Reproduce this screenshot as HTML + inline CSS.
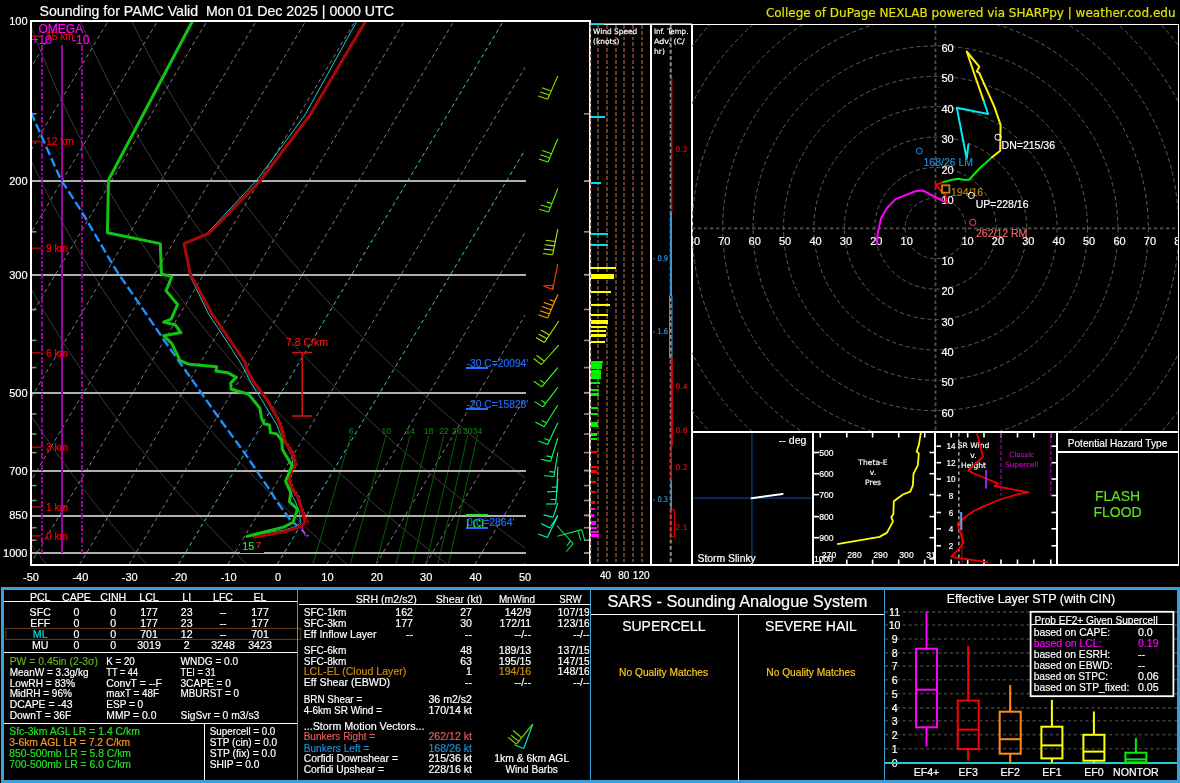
<!DOCTYPE html>
<html lang="en"><head><meta charset="utf-8"><title>Sounding for PAMC</title>
<style>
html,body{margin:0;padding:0;background:#000;}
body{width:1180px;height:783px;overflow:hidden;}
svg{display:block;will-change:transform;}
text{stroke-width:0.18px;}
text.s{font-family:"Liberation Sans", sans-serif;}
text.d{font-family:"DejaVu Sans", "Liberation Sans", sans-serif;}
</style></head><body>
<svg width="1180" height="783" viewBox="0 0 1180 783">
<rect x="0" y="0" width="1180" height="783" fill="#000"/>
<text class="s" x="39.5" y="15.6" font-size="15" fill="#fff" stroke="#fff" textLength="354.5" lengthAdjust="spacingAndGlyphs">Sounding for PAMC Valid  Mon 01 Dec 2025 | 0000 UTC</text>
<text class="d" x="1175.5" y="16.8" font-size="12" fill="#e2e200" stroke="#e2e200" text-anchor="end">College of DuPage NEXLAB powered via SHARPpy | weather.cod.edu</text>
<defs><clipPath id="cT"><rect x="31" y="21" width="494" height="543.3"/></clipPath><clipPath id="cF"><rect x="31" y="21" width="558" height="543.3"/></clipPath></defs>
<g clip-path="url(#cT)">
<polyline points="46.5,564.3 44.8,562.1 43.0,559.8 41.3,557.6 39.5,555.3 37.8,553.0 36.0,550.7 34.2,548.3 32.4,546.0 30.6,543.6 28.8,541.1 27.0,538.7 25.2,536.2 23.3,533.7 21.5,531.2 19.6,528.6 17.8,526.1 15.9,523.5 14.0,520.8 12.1,518.1 10.2,515.4 8.3,512.7 6.4,509.9 4.4,507.1 2.5,504.3 0.5,501.4 -1.5,498.5 -3.5,495.6 -5.4,492.6 -7.5,489.6 -9.5,486.5 -11.5,483.4 -13.6,480.3 -15.6,477.1 -17.7,473.9 -19.8,470.6 -21.9,467.3 -24.0,463.9 -26.1,460.5 -28.2,457.0 -30.4,453.5 -32.5,449.9 -34.7,446.2 -36.9,442.5 -39.1,438.8 -41.4,435.0 -43.6,431.1 -45.9,427.1 -48.1,423.1 -50.4,419.0 -52.7,414.9 -55.1,410.6 -57.4,406.3 -59.8,401.9 -62.1,397.4 -64.5,392.8 -66.9,388.2 -69.4,383.4 -71.8,378.5 -74.3,373.6 -76.8,368.5 -79.3,363.3 -81.8,358.0 -84.4,352.6 -87.0,347.0 -89.5,341.3 -92.2,335.4 -94.8,329.4 -97.5,323.3 -100.2,316.9 -102.9,310.4 -105.6,303.7 -108.3,296.8 -111.1,289.7 -113.9,282.4 -116.8,274.8 -119.6,267.0 -122.5,258.9 -125.4,250.5 -128.3,241.8 -131.2,232.7 -134.2,223.3 -137.2,213.4 -140.2,203.2 -143.2,192.4 -146.2,181.1 -149.3,169.3 -152.3,156.8 -155.3,143.6 -158.4,129.6 -161.4,114.7 -164.4,98.7 -167.3,81.6 -170.2,63.1 -172.9,43.0 -175.5,21.0" fill="none" stroke="#3a3a3a" stroke-width="1"/>
<polyline points="146.7,564.3 144.7,562.1 142.7,559.8 140.6,557.6 138.6,555.3 136.6,553.0 134.5,550.7 132.4,548.3 130.4,546.0 128.3,543.6 126.2,541.1 124.1,538.7 121.9,536.2 119.8,533.7 117.7,531.2 115.5,528.6 113.3,526.1 111.1,523.5 108.9,520.8 106.7,518.1 104.5,515.4 102.3,512.7 100.0,509.9 97.8,507.1 95.5,504.3 93.2,501.4 90.9,498.5 88.6,495.6 86.2,492.6 83.9,489.6 81.5,486.5 79.1,483.4 76.8,480.3 74.3,477.1 71.9,473.9 69.5,470.6 67.0,467.3 64.5,463.9 62.0,460.5 59.5,457.0 57.0,453.5 54.4,449.9 51.9,446.2 49.3,442.5 46.7,438.8 44.0,435.0 41.4,431.1 38.7,427.1 36.0,423.1 33.3,419.0 30.6,414.9 27.8,410.6 25.0,406.3 22.2,401.9 19.4,397.4 16.5,392.8 13.6,388.2 10.7,383.4 7.8,378.5 4.8,373.6 1.9,368.5 -1.2,363.3 -4.2,358.0 -7.3,352.6 -10.4,347.0 -13.5,341.3 -16.7,335.4 -19.9,329.4 -23.1,323.3 -26.4,316.9 -29.7,310.4 -33.0,303.7 -36.4,296.8 -39.8,289.7 -43.2,282.4 -46.7,274.8 -50.2,267.0 -53.8,258.9 -57.4,250.5 -61.1,241.8 -64.7,232.7 -68.5,223.3 -72.3,213.4 -76.1,203.2 -79.9,192.4 -83.8,181.1 -87.8,169.3 -91.8,156.8 -95.8,143.6 -99.9,129.6 -103.9,114.7 -108.0,98.7 -112.1,81.6 -116.3,63.1 -120.3,43.0 -124.3,21.0" fill="none" stroke="#3a3a3a" stroke-width="1"/>
<polyline points="246.9,564.3 244.6,562.1 242.3,559.8 240.0,557.6 237.7,555.3 235.4,553.0 233.0,550.7 230.7,548.3 228.3,546.0 225.9,543.6 223.5,541.1 221.1,538.7 218.7,536.2 216.3,533.7 213.8,531.2 211.4,528.6 208.9,526.1 206.4,523.5 203.9,520.8 201.4,518.1 198.8,515.4 196.3,512.7 193.7,509.9 191.1,507.1 188.5,504.3 185.9,501.4 183.3,498.5 180.6,495.6 177.9,492.6 175.2,489.6 172.5,486.5 169.8,483.4 167.1,480.3 164.3,477.1 161.5,473.9 158.7,470.6 155.9,467.3 153.0,463.9 150.1,460.5 147.3,457.0 144.3,453.5 141.4,449.9 138.4,446.2 135.5,442.5 132.4,438.8 129.4,435.0 126.3,431.1 123.3,427.1 120.1,423.1 117.0,419.0 113.8,414.9 110.6,410.6 107.4,406.3 104.2,401.9 100.9,397.4 97.6,392.8 94.2,388.2 90.8,383.4 87.4,378.5 84.0,373.6 80.5,368.5 77.0,363.3 73.4,358.0 69.8,352.6 66.2,347.0 62.5,341.3 58.8,335.4 55.1,329.4 51.3,323.3 47.4,316.9 43.5,310.4 39.6,303.7 35.6,296.8 31.6,289.7 27.5,282.4 23.3,274.8 19.1,267.0 14.9,258.9 10.6,250.5 6.2,241.8 1.7,232.7 -2.8,223.3 -7.3,213.4 -12.0,203.2 -16.7,192.4 -21.5,181.1 -26.3,169.3 -31.2,156.8 -36.2,143.6 -41.3,129.6 -46.5,114.7 -51.7,98.7 -57.0,81.6 -62.3,63.1 -67.7,43.0 -73.2,21.0" fill="none" stroke="#3a3a3a" stroke-width="1"/>
<polyline points="347.1,564.3 344.5,562.1 341.9,559.8 339.4,557.6 336.8,555.3 334.2,553.0 331.5,550.7 328.9,548.3 326.3,546.0 323.6,543.6 320.9,541.1 318.2,538.7 315.5,536.2 312.8,533.7 310.0,531.2 307.2,528.6 304.5,526.1 301.7,523.5 298.8,520.8 296.0,518.1 293.2,515.4 290.3,512.7 287.4,509.9 284.5,507.1 281.5,504.3 278.6,501.4 275.6,498.5 272.6,495.6 269.6,492.6 266.6,489.6 263.5,486.5 260.5,483.4 257.4,480.3 254.2,477.1 251.1,473.9 247.9,470.6 244.7,467.3 241.5,463.9 238.3,460.5 235.0,457.0 231.7,453.5 228.4,449.9 225.0,446.2 221.6,442.5 218.2,438.8 214.8,435.0 211.3,431.1 207.8,427.1 204.3,423.1 200.7,419.0 197.1,414.9 193.5,410.6 189.8,406.3 186.1,401.9 182.4,397.4 178.6,392.8 174.8,388.2 171.0,383.4 167.1,378.5 163.1,373.6 159.2,368.5 155.1,363.3 151.1,358.0 147.0,352.6 142.8,347.0 138.6,341.3 134.3,335.4 130.0,329.4 125.6,323.3 121.2,316.9 116.7,310.4 112.2,303.7 107.6,296.8 102.9,289.7 98.2,282.4 93.4,274.8 88.5,267.0 83.6,258.9 78.5,250.5 73.4,241.8 68.2,232.7 63.0,223.3 57.6,213.4 52.1,203.2 46.6,192.4 40.9,181.1 35.2,169.3 29.3,156.8 23.3,143.6 17.2,129.6 11.0,114.7 4.6,98.7 -1.8,81.6 -8.4,63.1 -15.2,43.0 -22.0,21.0" fill="none" stroke="#3a3a3a" stroke-width="1"/>
<polyline points="447.2,564.3 444.4,562.1 441.6,559.8 438.7,557.6 435.9,555.3 433.0,553.0 430.1,550.7 427.1,548.3 424.2,546.0 421.2,543.6 418.3,541.1 415.3,538.7 412.3,536.2 409.2,533.7 406.2,531.2 403.1,528.6 400.0,526.1 396.9,523.5 393.8,520.8 390.6,518.1 387.5,515.4 384.3,512.7 381.1,509.9 377.8,507.1 374.6,504.3 371.3,501.4 368.0,498.5 364.7,495.6 361.3,492.6 357.9,489.6 354.5,486.5 351.1,483.4 347.7,480.3 344.2,477.1 340.7,473.9 337.1,470.6 333.6,467.3 330.0,463.9 326.4,460.5 322.7,457.0 319.1,453.5 315.3,449.9 311.6,446.2 307.8,442.5 304.0,438.8 300.2,435.0 296.3,431.1 292.4,427.1 288.4,423.1 284.4,419.0 280.4,414.9 276.4,410.6 272.2,406.3 268.1,401.9 263.9,397.4 259.7,392.8 255.4,388.2 251.1,383.4 246.7,378.5 242.3,373.6 237.8,368.5 233.3,363.3 228.7,358.0 224.1,352.6 219.4,347.0 214.6,341.3 209.8,335.4 204.9,329.4 200.0,323.3 195.0,316.9 189.9,310.4 184.8,303.7 179.6,296.8 174.3,289.7 168.9,282.4 163.4,274.8 157.9,267.0 152.2,258.9 146.5,250.5 140.7,241.8 134.7,232.7 128.7,223.3 122.5,213.4 116.2,203.2 109.8,192.4 103.3,181.1 96.6,169.3 89.8,156.8 82.9,143.6 75.7,129.6 68.4,114.7 61.0,98.7 53.3,81.6 45.5,63.1 37.4,43.0 29.2,21.0" fill="none" stroke="#3a3a3a" stroke-width="1"/>
<polyline points="547.4,564.3 544.3,562.1 541.2,559.8 538.1,557.6 534.9,555.3 531.8,553.0 528.6,550.7 525.4,548.3 522.1,546.0 518.9,543.6 515.6,541.1 512.3,538.7 509.0,536.2 505.7,533.7 502.4,531.2 499.0,528.6 495.6,526.1 492.2,523.5 488.7,520.8 485.3,518.1 481.8,515.4 478.3,512.7 474.7,509.9 471.2,507.1 467.6,504.3 464.0,501.4 460.4,498.5 456.7,495.6 453.0,492.6 449.3,489.6 445.5,486.5 441.8,483.4 438.0,480.3 434.1,477.1 430.3,473.9 426.4,470.6 422.5,467.3 418.5,463.9 414.5,460.5 410.5,457.0 406.4,453.5 402.3,449.9 398.2,446.2 394.0,442.5 389.8,438.8 385.6,435.0 381.3,431.1 376.9,427.1 372.6,423.1 368.2,419.0 363.7,414.9 359.2,410.6 354.7,406.3 350.1,401.9 345.4,397.4 340.7,392.8 336.0,388.2 331.2,383.4 326.3,378.5 321.4,373.6 316.4,368.5 311.4,363.3 306.3,358.0 301.2,352.6 296.0,347.0 290.7,341.3 285.3,335.4 279.9,329.4 274.4,323.3 268.8,316.9 263.1,310.4 257.4,303.7 251.5,296.8 245.6,289.7 239.6,282.4 233.5,274.8 227.2,267.0 220.9,258.9 214.5,250.5 207.9,241.8 201.2,232.7 194.4,223.3 187.4,213.4 180.3,203.2 173.1,192.4 165.7,181.1 158.1,169.3 150.4,156.8 142.4,143.6 134.3,129.6 125.9,114.7 117.3,98.7 108.5,81.6 99.4,63.1 90.0,43.0 80.4,21.0" fill="none" stroke="#3a3a3a" stroke-width="1"/>
<polyline points="647.6,564.3 644.2,562.1 640.9,559.8 637.4,557.6 634.0,555.3 630.6,553.0 627.1,550.7 623.6,548.3 620.1,546.0 616.5,543.6 613.0,541.1 609.4,538.7 605.8,536.2 602.2,533.7 598.5,531.2 594.9,528.6 591.2,526.1 587.4,523.5 583.7,520.8 579.9,518.1 576.1,515.4 572.3,512.7 568.4,509.9 564.5,507.1 560.6,504.3 556.7,501.4 552.7,498.5 548.7,495.6 544.7,492.6 540.6,489.6 536.5,486.5 532.4,483.4 528.3,480.3 524.1,477.1 519.9,473.9 515.6,470.6 511.3,467.3 507.0,463.9 502.6,460.5 498.2,457.0 493.8,453.5 489.3,449.9 484.8,446.2 480.2,442.5 475.6,438.8 470.9,435.0 466.2,431.1 461.5,427.1 456.7,423.1 451.9,419.0 447.0,414.9 442.1,410.6 437.1,406.3 432.0,401.9 426.9,397.4 421.8,392.8 416.6,388.2 411.3,383.4 406.0,378.5 400.6,373.6 395.1,368.5 389.6,363.3 384.0,358.0 378.3,352.6 372.5,347.0 366.7,341.3 360.8,335.4 354.8,329.4 348.7,323.3 342.6,316.9 336.3,310.4 330.0,303.7 323.5,296.8 317.0,289.7 310.3,282.4 303.5,274.8 296.6,267.0 289.6,258.9 282.4,250.5 275.1,241.8 267.7,232.7 260.1,223.3 252.4,213.4 244.4,203.2 236.3,192.4 228.1,181.1 219.6,169.3 210.9,156.8 202.0,143.6 192.8,129.6 183.4,114.7 173.6,98.7 163.6,81.6 153.3,63.1 142.6,43.0 131.5,21.0" fill="none" stroke="#3a3a3a" stroke-width="1"/>
<line x1="-513.1" y1="564.3" x2="-188.2" y2="21.0" stroke="#7d7d7d" stroke-width="1" stroke-dasharray="4 3.2"/>
<line x1="-463.7" y1="564.3" x2="-138.8" y2="21.0" stroke="#7d7d7d" stroke-width="1" stroke-dasharray="4 3.2"/>
<line x1="-414.3" y1="564.3" x2="-89.4" y2="21.0" stroke="#7d7d7d" stroke-width="1" stroke-dasharray="4 3.2"/>
<line x1="-364.9" y1="564.3" x2="-40.0" y2="21.0" stroke="#7d7d7d" stroke-width="1" stroke-dasharray="4 3.2"/>
<line x1="-315.5" y1="564.3" x2="9.4" y2="21.0" stroke="#7d7d7d" stroke-width="1" stroke-dasharray="4 3.2"/>
<line x1="-266.1" y1="564.3" x2="58.8" y2="21.0" stroke="#7d7d7d" stroke-width="1" stroke-dasharray="4 3.2"/>
<line x1="-216.7" y1="564.3" x2="108.2" y2="21.0" stroke="#7d7d7d" stroke-width="1" stroke-dasharray="4 3.2"/>
<line x1="-167.3" y1="564.3" x2="157.6" y2="21.0" stroke="#7d7d7d" stroke-width="1" stroke-dasharray="4 3.2"/>
<line x1="-117.9" y1="564.3" x2="207.0" y2="21.0" stroke="#7d7d7d" stroke-width="1" stroke-dasharray="4 3.2"/>
<line x1="-68.5" y1="564.3" x2="256.4" y2="21.0" stroke="#7d7d7d" stroke-width="1" stroke-dasharray="4 3.2"/>
<line x1="-19.1" y1="564.3" x2="305.8" y2="21.0" stroke="#7d7d7d" stroke-width="1" stroke-dasharray="4 3.2"/>
<line x1="30.3" y1="564.3" x2="355.2" y2="21.0" stroke="#7d7d7d" stroke-width="1" stroke-dasharray="4 3.2"/>
<line x1="79.7" y1="564.3" x2="404.6" y2="21.0" stroke="#7d7d7d" stroke-width="1" stroke-dasharray="4 3.2"/>
<line x1="129.1" y1="564.3" x2="454.0" y2="21.0" stroke="#7d7d7d" stroke-width="1" stroke-dasharray="4 3.2"/>
<line x1="178.5" y1="564.3" x2="503.4" y2="21.0" stroke="#3cc6c6" stroke-width="1" stroke-dasharray="4 3.2"/>
<line x1="227.9" y1="564.3" x2="552.8" y2="21.0" stroke="#7d7d7d" stroke-width="1" stroke-dasharray="4 3.2"/>
<line x1="277.3" y1="564.3" x2="602.2" y2="21.0" stroke="#3cc6c6" stroke-width="1" stroke-dasharray="4 3.2"/>
<line x1="326.7" y1="564.3" x2="651.6" y2="21.0" stroke="#7d7d7d" stroke-width="1" stroke-dasharray="4 3.2"/>
<line x1="376.1" y1="564.3" x2="701.0" y2="21.0" stroke="#7d7d7d" stroke-width="1" stroke-dasharray="4 3.2"/>
<line x1="425.5" y1="564.3" x2="750.4" y2="21.0" stroke="#7d7d7d" stroke-width="1" stroke-dasharray="4 3.2"/>
<line x1="474.9" y1="564.3" x2="799.8" y2="21.0" stroke="#7d7d7d" stroke-width="1" stroke-dasharray="4 3.2"/>
<line x1="524.3" y1="564.3" x2="849.2" y2="21.0" stroke="#7d7d7d" stroke-width="1" stroke-dasharray="4 3.2"/>
<line x1="312.8" y1="564.3" x2="351.1" y2="435.0" stroke="#006400" stroke-width="1"/>
<text class="s" x="351.1" y="433.5" font-size="8.5" fill="#0a7a0a" stroke="#0a7a0a" text-anchor="middle">6</text>
<line x1="350.3" y1="564.3" x2="386.2" y2="435.0" stroke="#006400" stroke-width="1"/>
<text class="s" x="386.2" y="433.5" font-size="8.5" fill="#0a7a0a" stroke="#0a7a0a" text-anchor="middle">10</text>
<line x1="376.1" y1="564.3" x2="410.3" y2="435.0" stroke="#006400" stroke-width="1"/>
<text class="s" x="410.3" y="433.5" font-size="8.5" fill="#0a7a0a" stroke="#0a7a0a" text-anchor="middle">14</text>
<line x1="396.0" y1="564.3" x2="428.8" y2="435.0" stroke="#006400" stroke-width="1"/>
<text class="s" x="428.8" y="433.5" font-size="8.5" fill="#0a7a0a" stroke="#0a7a0a" text-anchor="middle">18</text>
<line x1="412.2" y1="564.3" x2="443.9" y2="435.0" stroke="#006400" stroke-width="1"/>
<text class="s" x="443.9" y="433.5" font-size="8.5" fill="#0a7a0a" stroke="#0a7a0a" text-anchor="middle">22</text>
<line x1="425.9" y1="564.3" x2="456.7" y2="435.0" stroke="#006400" stroke-width="1"/>
<text class="s" x="456.7" y="433.5" font-size="8.5" fill="#0a7a0a" stroke="#0a7a0a" text-anchor="middle">26</text>
<line x1="437.8" y1="564.3" x2="467.8" y2="435.0" stroke="#006400" stroke-width="1"/>
<text class="s" x="467.8" y="433.5" font-size="8.5" fill="#0a7a0a" stroke="#0a7a0a" text-anchor="middle">30</text>
<line x1="448.4" y1="564.3" x2="477.6" y2="435.0" stroke="#006400" stroke-width="1"/>
<text class="s" x="477.6" y="433.5" font-size="8.5" fill="#0a7a0a" stroke="#0a7a0a" text-anchor="middle">34</text>
</g>
<line x1="31.0" y1="181.0" x2="525.6" y2="181.0" stroke="#b0b0b0" stroke-width="2" shape-rendering="crispEdges"/>
<line x1="31.0" y1="275.0" x2="525.6" y2="275.0" stroke="#b0b0b0" stroke-width="2" shape-rendering="crispEdges"/>
<line x1="31.0" y1="393.0" x2="525.6" y2="393.0" stroke="#b0b0b0" stroke-width="2" shape-rendering="crispEdges"/>
<line x1="31.0" y1="471.0" x2="525.6" y2="471.0" stroke="#b0b0b0" stroke-width="2" shape-rendering="crispEdges"/>
<line x1="31.0" y1="516.0" x2="525.6" y2="516.0" stroke="#b0b0b0" stroke-width="2" shape-rendering="crispEdges"/>
<line x1="31.0" y1="553.0" x2="525.6" y2="553.0" stroke="#b0b0b0" stroke-width="2" shape-rendering="crispEdges"/>
<line x1="32.0" y1="113.8" x2="36.5" y2="113.8" stroke="#8a8a8a" stroke-width="1.6"/>
<line x1="584.0" y1="113.8" x2="589.0" y2="113.8" stroke="#8a8a8a" stroke-width="1.6"/>
<line x1="584.0" y1="181.1" x2="589.0" y2="181.1" stroke="#9a9a9a" stroke-width="1.8"/>
<line x1="32.0" y1="231.8" x2="36.5" y2="231.8" stroke="#8a8a8a" stroke-width="1.6"/>
<line x1="584.0" y1="231.8" x2="589.0" y2="231.8" stroke="#8a8a8a" stroke-width="1.6"/>
<line x1="584.0" y1="274.8" x2="589.0" y2="274.8" stroke="#9a9a9a" stroke-width="1.8"/>
<line x1="32.0" y1="309.5" x2="36.5" y2="309.5" stroke="#8a8a8a" stroke-width="1.6"/>
<line x1="584.0" y1="309.5" x2="589.0" y2="309.5" stroke="#8a8a8a" stroke-width="1.6"/>
<line x1="32.0" y1="340.4" x2="36.5" y2="340.4" stroke="#8a8a8a" stroke-width="1.6"/>
<line x1="584.0" y1="340.4" x2="589.0" y2="340.4" stroke="#8a8a8a" stroke-width="1.6"/>
<line x1="32.0" y1="367.6" x2="36.5" y2="367.6" stroke="#8a8a8a" stroke-width="1.6"/>
<line x1="584.0" y1="367.6" x2="589.0" y2="367.6" stroke="#8a8a8a" stroke-width="1.6"/>
<line x1="584.0" y1="392.8" x2="589.0" y2="392.8" stroke="#9a9a9a" stroke-width="1.8"/>
<line x1="32.0" y1="414.0" x2="36.5" y2="414.0" stroke="#8a8a8a" stroke-width="1.6"/>
<line x1="584.0" y1="414.0" x2="589.0" y2="414.0" stroke="#8a8a8a" stroke-width="1.6"/>
<line x1="32.0" y1="434.1" x2="36.5" y2="434.1" stroke="#8a8a8a" stroke-width="1.6"/>
<line x1="584.0" y1="434.1" x2="589.0" y2="434.1" stroke="#8a8a8a" stroke-width="1.6"/>
<line x1="32.0" y1="452.6" x2="36.5" y2="452.6" stroke="#8a8a8a" stroke-width="1.6"/>
<line x1="584.0" y1="452.6" x2="589.0" y2="452.6" stroke="#8a8a8a" stroke-width="1.6"/>
<line x1="584.0" y1="470.6" x2="589.0" y2="470.6" stroke="#9a9a9a" stroke-width="1.8"/>
<line x1="32.0" y1="485.6" x2="36.5" y2="485.6" stroke="#8a8a8a" stroke-width="1.6"/>
<line x1="584.0" y1="485.6" x2="589.0" y2="485.6" stroke="#8a8a8a" stroke-width="1.6"/>
<line x1="32.0" y1="500.5" x2="36.5" y2="500.5" stroke="#8a8a8a" stroke-width="1.6"/>
<line x1="584.0" y1="500.5" x2="589.0" y2="500.5" stroke="#8a8a8a" stroke-width="1.6"/>
<line x1="584.0" y1="515.4" x2="589.0" y2="515.4" stroke="#9a9a9a" stroke-width="1.8"/>
<line x1="32.0" y1="527.7" x2="36.5" y2="527.7" stroke="#8a8a8a" stroke-width="1.6"/>
<line x1="584.0" y1="527.7" x2="589.0" y2="527.7" stroke="#8a8a8a" stroke-width="1.6"/>
<line x1="32.0" y1="540.2" x2="36.5" y2="540.2" stroke="#8a8a8a" stroke-width="1.6"/>
<line x1="584.0" y1="540.2" x2="589.0" y2="540.2" stroke="#8a8a8a" stroke-width="1.6"/>
<line x1="584.0" y1="553.0" x2="589.0" y2="553.0" stroke="#9a9a9a" stroke-width="1.8"/>
<text class="s" x="27.5" y="25.0" font-size="11" fill="#fff" stroke="#fff" text-anchor="end">100</text>
<text class="s" x="27.5" y="185.1" font-size="11" fill="#fff" stroke="#fff" text-anchor="end">200</text>
<text class="s" x="27.5" y="278.8" font-size="11" fill="#fff" stroke="#fff" text-anchor="end">300</text>
<text class="s" x="27.5" y="396.8" font-size="11" fill="#fff" stroke="#fff" text-anchor="end">500</text>
<text class="s" x="27.5" y="474.6" font-size="11" fill="#fff" stroke="#fff" text-anchor="end">700</text>
<text class="s" x="27.5" y="519.4" font-size="11" fill="#fff" stroke="#fff" text-anchor="end">850</text>
<text class="s" x="27.5" y="557.0" font-size="11" fill="#fff" stroke="#fff" text-anchor="end">1000</text>
<text class="s" x="31.0" y="581.0" font-size="11" fill="#fff" stroke="#fff" text-anchor="middle">-50</text>
<text class="s" x="80.4" y="581.0" font-size="11" fill="#fff" stroke="#fff" text-anchor="middle">-40</text>
<text class="s" x="129.8" y="581.0" font-size="11" fill="#fff" stroke="#fff" text-anchor="middle">-30</text>
<text class="s" x="179.2" y="581.0" font-size="11" fill="#fff" stroke="#fff" text-anchor="middle">-20</text>
<text class="s" x="228.6" y="581.0" font-size="11" fill="#fff" stroke="#fff" text-anchor="middle">-10</text>
<text class="s" x="278.0" y="581.0" font-size="11" fill="#fff" stroke="#fff" text-anchor="middle">0</text>
<text class="s" x="327.4" y="581.0" font-size="11" fill="#fff" stroke="#fff" text-anchor="middle">10</text>
<text class="s" x="376.8" y="581.0" font-size="11" fill="#fff" stroke="#fff" text-anchor="middle">20</text>
<text class="s" x="426.2" y="581.0" font-size="11" fill="#fff" stroke="#fff" text-anchor="middle">30</text>
<text class="s" x="475.6" y="581.0" font-size="11" fill="#fff" stroke="#fff" text-anchor="middle">40</text>
<text class="s" x="525.0" y="581.0" font-size="11" fill="#fff" stroke="#fff" text-anchor="middle">50</text>
<line x1="42.0" y1="45.0" x2="42.0" y2="553.0" stroke="#a800a8" stroke-width="1.8" stroke-dasharray="6 2 2 2"/>
<line x1="82.0" y1="45.0" x2="82.0" y2="553.0" stroke="#a800a8" stroke-width="1.8" stroke-dasharray="6 2 2 2"/>
<line x1="62.0" y1="45.0" x2="62.0" y2="553.0" stroke="#a000a0" stroke-width="2"/>
<text class="s" x="38.5" y="33.0" font-size="12" fill="#ff00ff" stroke="#ff00ff">OMEGA</text>
<text class="s" x="31.5" y="44.0" font-size="12" fill="#ff00ff" stroke="#ff00ff">+10</text>
<text class="s" x="72.0" y="44.0" font-size="12" fill="#ff00ff" stroke="#ff00ff">-10</text>
<line x1="31.5" y1="535.9" x2="41.0" y2="535.9" stroke="#a00000" stroke-width="1.8"/>
<text class="s" x="46.0" y="539.7" font-size="10.2" fill="#ff0000" stroke="#ff0000">0 km</text>
<line x1="31.5" y1="507.0" x2="41.0" y2="507.0" stroke="#a00000" stroke-width="1.8"/>
<text class="s" x="46.0" y="510.8" font-size="10.2" fill="#ff0000" stroke="#ff0000">1 km</text>
<line x1="31.5" y1="447.2" x2="41.0" y2="447.2" stroke="#a00000" stroke-width="1.8"/>
<text class="s" x="46.0" y="451.0" font-size="10.2" fill="#ff0000" stroke="#ff0000">3 km</text>
<line x1="31.5" y1="352.8" x2="41.0" y2="352.8" stroke="#a00000" stroke-width="1.8"/>
<text class="s" x="46.0" y="356.6" font-size="10.2" fill="#ff0000" stroke="#ff0000">6 km</text>
<line x1="31.5" y1="248.3" x2="41.0" y2="248.3" stroke="#a00000" stroke-width="1.8"/>
<text class="s" x="46.0" y="252.1" font-size="10.2" fill="#ff0000" stroke="#ff0000">9 km</text>
<line x1="31.5" y1="141.5" x2="41.0" y2="141.5" stroke="#a00000" stroke-width="1.8"/>
<text class="s" x="46.0" y="145.3" font-size="10.2" fill="#ff0000" stroke="#ff0000">12 km</text>
<line x1="31.5" y1="36.0" x2="41.0" y2="36.0" stroke="#a00000" stroke-width="1.8"/>
<text class="s" x="46.0" y="39.8" font-size="10.2" fill="#ff0000" stroke="#ff0000">15 km</text>
<g clip-path="url(#cF)">
<polyline points="31.0,112.5 61.0,180.0 67.7,190.0 81.8,211.7 112.4,264.1 118.8,274.3 139.3,303.7 163.6,339.5 178.9,361.2 199.3,390.0 216.6,414.7 244.7,453.1 271.6,492.7 275.8,500.0 290.3,519.9 296.0,524.8" fill="none" stroke="#1e8fff" stroke-width="2.4" stroke-dasharray="9 3.5"/>
<polyline points="296.0,524.8 298.7,527.1 308.1,536.4" fill="none" stroke="#1e8fff" stroke-width="2" stroke-dasharray="5 2.5"/>
<polyline points="300.4,524.2 305.5,535.6" fill="none" stroke="#d020e0" stroke-width="1.4"/>
<polyline points="357.8,19.5 305.0,115.0 257.0,180.0 207.5,233.0 184.5,243.7 189.5,275.0 208.6,314.0 228.5,344.0 242.5,366.0 250.0,381.0 256.5,392.0 261.0,398.5 269.0,412.0 277.0,425.0 279.8,433.0 292.0,456.0 293.0,467.0 289.0,473.0 291.0,493.0 296.0,503.0 299.6,512.7 300.4,522.5 296.2,526.3 284.3,530.1 262.0,533.5" fill="none" stroke="#20c8d8" stroke-width="1"/>
<polyline points="255.0,385.0 266.5,397.0 274.5,411.0 281.5,424.0 284.0,433.0 285.0,439.5 294.0,453.0 295.5,459.5 297.3,465.0 292.5,471.0 290.8,479.7 293.2,488.0 299.5,497.0 300.4,502.5 305.5,515.3 308.5,522.9 306.8,525.0" fill="none" stroke="#ff1010" stroke-width="1.2" stroke-dasharray="3 1.5"/>
<polyline points="366.5,19.5 310.0,115.0 260.0,181.0 209.5,233.0 184.0,243.6 190.6,274.8 212.1,314.0 245.3,362.5 246.6,368.9 252.4,380.0 264.9,396.6 273.2,410.7 278.2,419.9 279.8,424.0 282.3,433.2 283.5,439.8 292.3,453.1 293.9,459.7 295.6,464.7 290.6,470.5 289.0,479.7 291.4,488.0 298.1,497.9 301.3,508.5 305.1,522.0 301.3,526.3 284.3,531.8 254.2,537.0" fill="none" stroke="#a80808" stroke-width="3" stroke-linejoin="round" stroke-linecap="round"/>
<polyline points="192.5,21.0 108.5,180.0 107.4,232.8 160.3,243.6 161.5,273.8 171.7,276.9 166.1,290.9 177.6,304.5 171.2,319.1 163.6,322.1 175.0,324.7 181.0,332.6 163.6,335.7 171.7,343.3 180.2,360.7 189.1,364.3 216.7,366.8 216.0,371.0 227.5,372.7 236.4,377.3 230.7,382.8 231.2,389.2 248.6,394.3 260.0,408.3 261.3,417.3 263.9,423.7 269.5,425.0 270.3,432.6 276.7,433.9 281.8,440.3 282.3,449.2 292.0,465.8 285.6,481.2 290.7,492.7 289.4,501.7 297.5,509.3 295.3,515.3 292.8,522.5 283.5,527.1 247.0,536.4" fill="none" stroke="#12c412" stroke-width="3" stroke-linejoin="round" stroke-linecap="round"/>
</g>
<rect x="240.0" y="540.5" width="24.0" height="12.5" fill="#000" stroke="none" stroke-width="1"/>
<text class="s" x="242.3" y="549.8" font-size="10.8" fill="#22ee22" stroke="#22ee22">15</text>
<text class="s" x="256.2" y="548.3" font-size="8.6" fill="#ff2020" stroke="#ff2020">7</text>
<line x1="302.2" y1="352.6" x2="302.2" y2="416.0" stroke="#d01010" stroke-width="1.6"/>
<line x1="292.0" y1="352.6" x2="312.0" y2="352.6" stroke="#d01010" stroke-width="1.6"/>
<line x1="292.0" y1="416.0" x2="312.0" y2="416.0" stroke="#d01010" stroke-width="1.6"/>
<text class="s" x="286.0" y="345.5" font-size="10.5" fill="#ff1010" stroke="#ff1010">7.8 C/km</text>
<line x1="466.0" y1="368.0" x2="488.0" y2="368.0" stroke="#1e6eff" stroke-width="2" shape-rendering="crispEdges"/>
<text class="s" x="466.6" y="366.8" font-size="10.8" fill="#1e6eff" stroke="#1e6eff" textLength="61.7" lengthAdjust="spacingAndGlyphs">-30 C=20094'</text>
<line x1="466.0" y1="409.0" x2="488.0" y2="409.0" stroke="#1e6eff" stroke-width="2" shape-rendering="crispEdges"/>
<text class="s" x="466.6" y="407.5" font-size="10.8" fill="#1e6eff" stroke="#1e6eff" textLength="61.7" lengthAdjust="spacingAndGlyphs">-20 C=15828'</text>
<line x1="466.0" y1="515.0" x2="488.0" y2="515.0" stroke="#22ee22" stroke-width="2" shape-rendering="crispEdges"/>
<text class="s" x="465.9" y="527.7" font-size="12" fill="#22ee22" stroke="#22ee22">LCL</text>
<line x1="466.0" y1="528.0" x2="488.0" y2="528.0" stroke="#1e6eff" stroke-width="2" shape-rendering="crispEdges"/>
<text class="s" x="467.1" y="525.7" font-size="10.8" fill="#1e6eff" stroke="#1e6eff" textLength="47.3" lengthAdjust="spacingAndGlyphs">0 C=2864'</text>
<line x1="557.8" y1="75.9" x2="547.6" y2="99.2" stroke="#8ee000" stroke-width="1.1"/>
<line x1="547.6" y1="99.2" x2="538.3" y2="96.0" stroke="#8ee000" stroke-width="1.1"/>
<line x1="549.4" y1="95.1" x2="540.1" y2="91.9" stroke="#8ee000" stroke-width="1.1"/>
<line x1="551.2" y1="91.0" x2="541.9" y2="87.7" stroke="#8ee000" stroke-width="1.1"/>
<line x1="557.8" y1="138.8" x2="548.0" y2="162.0" stroke="#60f000" stroke-width="1.1"/>
<line x1="548.0" y1="162.0" x2="538.7" y2="158.9" stroke="#60f000" stroke-width="1.1"/>
<line x1="549.8" y1="157.9" x2="540.4" y2="154.8" stroke="#60f000" stroke-width="1.1"/>
<line x1="551.5" y1="153.7" x2="542.2" y2="150.6" stroke="#60f000" stroke-width="1.1"/>
<line x1="557.8" y1="188.5" x2="548.6" y2="212.0" stroke="#50f000" stroke-width="1.1"/>
<line x1="548.6" y1="212.0" x2="539.2" y2="209.2" stroke="#50f000" stroke-width="1.1"/>
<line x1="550.2" y1="207.8" x2="540.8" y2="205.0" stroke="#50f000" stroke-width="1.1"/>
<line x1="551.9" y1="203.6" x2="546.7" y2="202.1" stroke="#50f000" stroke-width="1.1"/>
<line x1="557.8" y1="229.2" x2="552.7" y2="254.7" stroke="#b4e600" stroke-width="1.1"/>
<line x1="552.7" y1="254.7" x2="542.9" y2="253.5" stroke="#b4e600" stroke-width="1.1"/>
<line x1="553.6" y1="250.3" x2="543.8" y2="249.1" stroke="#b4e600" stroke-width="1.1"/>
<line x1="554.5" y1="245.9" x2="544.7" y2="244.7" stroke="#b4e600" stroke-width="1.1"/>
<line x1="555.3" y1="241.5" x2="545.6" y2="240.3" stroke="#b4e600" stroke-width="1.1"/>
<line x1="557.8" y1="263.9" x2="552.7" y2="289.4" stroke="#ff3c10" stroke-width="1.1"/>
<polygon points="552.7,289.4 543.4,286.0 553.6,285.0" fill="none" stroke="#ff3c10" stroke-width="1.1"/>
<line x1="557.8" y1="294.5" x2="547.6" y2="318.0" stroke="#ffa000" stroke-width="1.1"/>
<line x1="547.6" y1="318.0" x2="538.3" y2="314.8" stroke="#ffa000" stroke-width="1.1"/>
<line x1="549.4" y1="313.9" x2="540.1" y2="310.7" stroke="#ffa000" stroke-width="1.1"/>
<line x1="551.2" y1="309.7" x2="541.9" y2="306.6" stroke="#ffa000" stroke-width="1.1"/>
<line x1="553.0" y1="305.6" x2="543.7" y2="302.4" stroke="#ffa000" stroke-width="1.1"/>
<line x1="554.8" y1="301.5" x2="549.7" y2="299.7" stroke="#ffa000" stroke-width="1.1"/>
<line x1="558.8" y1="321.0" x2="544.5" y2="342.4" stroke="#a8e000" stroke-width="1.1"/>
<line x1="544.5" y1="342.4" x2="535.9" y2="337.6" stroke="#a8e000" stroke-width="1.1"/>
<line x1="547.0" y1="338.7" x2="538.4" y2="333.9" stroke="#a8e000" stroke-width="1.1"/>
<line x1="549.5" y1="334.9" x2="540.9" y2="330.1" stroke="#a8e000" stroke-width="1.1"/>
<line x1="558.8" y1="345.1" x2="541.4" y2="364.5" stroke="#80e800" stroke-width="1.1"/>
<line x1="541.4" y1="364.5" x2="533.6" y2="358.5" stroke="#80e800" stroke-width="1.1"/>
<line x1="544.4" y1="361.2" x2="536.6" y2="355.2" stroke="#80e800" stroke-width="1.1"/>
<line x1="557.8" y1="367.6" x2="541.8" y2="386.9" stroke="#48ff00" stroke-width="1.1"/>
<line x1="541.8" y1="386.9" x2="533.8" y2="381.2" stroke="#48ff00" stroke-width="1.1"/>
<line x1="544.7" y1="383.4" x2="540.2" y2="380.3" stroke="#48ff00" stroke-width="1.1"/>
<line x1="557.8" y1="387.3" x2="542.9" y2="406.9" stroke="#20ff20" stroke-width="1.1"/>
<line x1="542.9" y1="406.9" x2="534.6" y2="401.6" stroke="#20ff20" stroke-width="1.1"/>
<line x1="545.6" y1="403.3" x2="541.1" y2="400.4" stroke="#20ff20" stroke-width="1.1"/>
<line x1="557.8" y1="405.3" x2="544.1" y2="426.7" stroke="#10ff40" stroke-width="1.1"/>
<line x1="544.1" y1="426.7" x2="535.4" y2="422.1" stroke="#10ff40" stroke-width="1.1"/>
<line x1="546.5" y1="422.9" x2="541.8" y2="420.4" stroke="#10ff40" stroke-width="1.1"/>
<line x1="557.8" y1="422.7" x2="547.6" y2="444.5" stroke="#00ff50" stroke-width="1.1"/>
<line x1="547.6" y1="444.5" x2="538.4" y2="441.1" stroke="#00ff50" stroke-width="1.1"/>
<line x1="549.5" y1="440.4" x2="544.4" y2="438.5" stroke="#00ff50" stroke-width="1.1"/>
<line x1="557.8" y1="438.0" x2="550.6" y2="461.4" stroke="#00ff66" stroke-width="1.1"/>
<line x1="550.6" y1="461.4" x2="541.0" y2="459.3" stroke="#00ff66" stroke-width="1.1"/>
<line x1="551.9" y1="457.1" x2="546.6" y2="455.9" stroke="#00ff66" stroke-width="1.1"/>
<line x1="557.8" y1="452.4" x2="554.0" y2="476.5" stroke="#00ff80" stroke-width="1.1"/>
<line x1="554.0" y1="476.5" x2="544.2" y2="475.7" stroke="#00ff80" stroke-width="1.1"/>
<line x1="554.7" y1="472.1" x2="549.3" y2="471.6" stroke="#00ff80" stroke-width="1.1"/>
<line x1="557.8" y1="466.5" x2="556.9" y2="491.5" stroke="#00ff90" stroke-width="1.1"/>
<line x1="556.9" y1="491.5" x2="547.1" y2="491.9" stroke="#00ff90" stroke-width="1.1"/>
<line x1="557.1" y1="487.0" x2="551.7" y2="487.2" stroke="#00ff90" stroke-width="1.1"/>
<line x1="557.8" y1="479.0" x2="555.7" y2="504.0" stroke="#00ff9c" stroke-width="1.1"/>
<line x1="555.7" y1="504.0" x2="545.9" y2="504.0" stroke="#00ff9c" stroke-width="1.1"/>
<line x1="556.1" y1="499.5" x2="550.7" y2="499.5" stroke="#00ff9c" stroke-width="1.1"/>
<line x1="557.8" y1="503.0" x2="553.2" y2="517.2" stroke="#00ffa8" stroke-width="1.1"/>
<line x1="553.2" y1="517.2" x2="543.6" y2="514.9" stroke="#00ffa8" stroke-width="1.1"/>
<line x1="557.8" y1="515.5" x2="549.9" y2="528.0" stroke="#00ffc0" stroke-width="1.1"/>
<line x1="549.9" y1="528.0" x2="541.2" y2="523.4" stroke="#00ffc0" stroke-width="1.1"/>
<line x1="557.8" y1="515.5" x2="547.4" y2="537.6" stroke="#00ffd0" stroke-width="1.1"/>
<line x1="547.4" y1="537.6" x2="538.2" y2="534.1" stroke="#00ffd0" stroke-width="1.1"/>
<line x1="556.8" y1="525.5" x2="573.1" y2="543.7" stroke="#10e050" stroke-width="1.1"/>
<line x1="573.1" y1="543.7" x2="566.5" y2="551.5" stroke="#10e050" stroke-width="1.1"/>
<line x1="570.6" y1="540.9" x2="567.0" y2="545.6" stroke="#10e050" stroke-width="1.1"/>
<line x1="557.3" y1="536.3" x2="581.7" y2="529.6" stroke="#10e050" stroke-width="1.1"/>
<line x1="581.7" y1="529.6" x2="584.7" y2="540.4" stroke="#10e050" stroke-width="1.1"/>
<line x1="578.1" y1="530.6" x2="580.6" y2="540.4" stroke="#10e050" stroke-width="1.1"/>
<rect x="31.0" y="21.0" width="558.5" height="544.0" fill="none" stroke="#fff" stroke-width="2" shape-rendering="crispEdges"/>
<line x1="590.8" y1="25.0" x2="590.8" y2="564.0" stroke="#643c26" stroke-width="1" stroke-dasharray="3.8 2"/>
<line x1="598.0" y1="25.0" x2="598.0" y2="564.0" stroke="#643c26" stroke-width="2" stroke-dasharray="3.8 2" shape-rendering="crispEdges"/>
<line x1="607.0" y1="25.0" x2="607.0" y2="564.0" stroke="#643c26" stroke-width="2" stroke-dasharray="3.8 2" shape-rendering="crispEdges"/>
<line x1="616.0" y1="25.0" x2="616.0" y2="564.0" stroke="#643c26" stroke-width="2" stroke-dasharray="3.8 2" shape-rendering="crispEdges"/>
<line x1="624.0" y1="25.0" x2="624.0" y2="564.0" stroke="#643c26" stroke-width="2" stroke-dasharray="3.8 2" shape-rendering="crispEdges"/>
<line x1="633.0" y1="25.0" x2="633.0" y2="564.0" stroke="#643c26" stroke-width="2" stroke-dasharray="3.8 2" shape-rendering="crispEdges"/>
<line x1="642.0" y1="25.0" x2="642.0" y2="564.0" stroke="#643c26" stroke-width="2" stroke-dasharray="3.8 2" shape-rendering="crispEdges"/>
<rect x="590.5" y="23.5" width="13.5" height="1.4" fill="#00e0f0" stroke="none" stroke-width="1" shape-rendering="crispEdges"/>
<rect x="590.5" y="115.5" width="14.0" height="2.2" fill="#00e0f0" stroke="none" stroke-width="1" shape-rendering="crispEdges"/>
<rect x="590.5" y="181.5" width="10.5" height="2.2" fill="#00e0f0" stroke="none" stroke-width="1" shape-rendering="crispEdges"/>
<rect x="590.5" y="232.6" width="17.5" height="2.2" fill="#00e0f0" stroke="none" stroke-width="1" shape-rendering="crispEdges"/>
<rect x="590.5" y="243.9" width="17.5" height="2.2" fill="#00e0f0" stroke="none" stroke-width="1" shape-rendering="crispEdges"/>
<rect x="590.5" y="267.4" width="25.5" height="1.6" fill="#ffff00" stroke="none" stroke-width="1" shape-rendering="crispEdges"/>
<rect x="590.5" y="273.8" width="23.5" height="5.6" fill="#ffff00" stroke="none" stroke-width="1" shape-rendering="crispEdges"/>
<rect x="590.5" y="291.2" width="20.5" height="2.0" fill="#ffff00" stroke="none" stroke-width="1" shape-rendering="crispEdges"/>
<rect x="590.5" y="304.0" width="19.5" height="2.0" fill="#ffff00" stroke="none" stroke-width="1" shape-rendering="crispEdges"/>
<rect x="590.5" y="313.6" width="17.5" height="2.0" fill="#ffff00" stroke="none" stroke-width="1" shape-rendering="crispEdges"/>
<rect x="590.5" y="319.5" width="17.5" height="4.0" fill="#ffff00" stroke="none" stroke-width="1" shape-rendering="crispEdges"/>
<rect x="590.5" y="326.1" width="16.5" height="1.6" fill="#ffff00" stroke="none" stroke-width="1" shape-rendering="crispEdges"/>
<rect x="590.5" y="329.5" width="15.5" height="2.4" fill="#ffff00" stroke="none" stroke-width="1" shape-rendering="crispEdges"/>
<rect x="590.5" y="333.5" width="15.5" height="3.0" fill="#ffff00" stroke="none" stroke-width="1" shape-rendering="crispEdges"/>
<rect x="590.5" y="341.0" width="14.5" height="2.0" fill="#ffff00" stroke="none" stroke-width="1" shape-rendering="crispEdges"/>
<rect x="590.5" y="361.1" width="12.5" height="1.6" fill="#00ee00" stroke="none" stroke-width="1" shape-rendering="crispEdges"/>
<rect x="590.5" y="363.0" width="11.5" height="6.4" fill="#00ee00" stroke="none" stroke-width="1" shape-rendering="crispEdges"/>
<rect x="590.5" y="370.3" width="10.5" height="8.6" fill="#00ee00" stroke="none" stroke-width="1" shape-rendering="crispEdges"/>
<rect x="590.5" y="382.2" width="9.5" height="1.6" fill="#00ee00" stroke="none" stroke-width="1" shape-rendering="crispEdges"/>
<rect x="590.5" y="389.0" width="8.5" height="2.0" fill="#00ee00" stroke="none" stroke-width="1" shape-rendering="crispEdges"/>
<rect x="590.5" y="392.6" width="8.5" height="3.2" fill="#00ee00" stroke="none" stroke-width="1" shape-rendering="crispEdges"/>
<rect x="590.5" y="407.0" width="7.0" height="1.8" fill="#00ee00" stroke="none" stroke-width="1" shape-rendering="crispEdges"/>
<rect x="590.5" y="412.8" width="7.0" height="1.8" fill="#00ee00" stroke="none" stroke-width="1" shape-rendering="crispEdges"/>
<rect x="590.5" y="422.0" width="7.0" height="5.0" fill="#00ee00" stroke="none" stroke-width="1" shape-rendering="crispEdges"/>
<rect x="590.5" y="433.2" width="6.5" height="3.0" fill="#00ee00" stroke="none" stroke-width="1" shape-rendering="crispEdges"/>
<rect x="590.5" y="438.3" width="6.5" height="2.0" fill="#00ee00" stroke="none" stroke-width="1" shape-rendering="crispEdges"/>
<rect x="590.5" y="451.0" width="6.0" height="2.0" fill="#ff0000" stroke="none" stroke-width="1" shape-rendering="crispEdges"/>
<rect x="590.5" y="465.6" width="6.0" height="2.0" fill="#ff0000" stroke="none" stroke-width="1" shape-rendering="crispEdges"/>
<rect x="590.5" y="470.2" width="6.0" height="3.0" fill="#ff0000" stroke="none" stroke-width="1" shape-rendering="crispEdges"/>
<rect x="590.5" y="480.9" width="5.5" height="2.0" fill="#ff0000" stroke="none" stroke-width="1" shape-rendering="crispEdges"/>
<rect x="590.5" y="490.6" width="5.5" height="2.0" fill="#ff0000" stroke="none" stroke-width="1" shape-rendering="crispEdges"/>
<rect x="590.5" y="500.8" width="4.5" height="3.0" fill="#ff0000" stroke="none" stroke-width="1" shape-rendering="crispEdges"/>
<rect x="590.5" y="508.4" width="4.5" height="2.0" fill="#ff00ff" stroke="none" stroke-width="1" shape-rendering="crispEdges"/>
<rect x="590.5" y="513.5" width="3.5" height="3.0" fill="#ff00ff" stroke="none" stroke-width="1" shape-rendering="crispEdges"/>
<rect x="590.5" y="521.2" width="5.5" height="4.0" fill="#ff00ff" stroke="none" stroke-width="1" shape-rendering="crispEdges"/>
<rect x="590.5" y="526.8" width="6.5" height="2.0" fill="#ff00ff" stroke="none" stroke-width="1" shape-rendering="crispEdges"/>
<rect x="590.5" y="530.7" width="7.5" height="2.0" fill="#ff00ff" stroke="none" stroke-width="1" shape-rendering="crispEdges"/>
<rect x="590.5" y="534.0" width="8.5" height="3.0" fill="#ff00ff" stroke="none" stroke-width="1" shape-rendering="crispEdges"/>
<line x1="590.5" y1="24.2" x2="692.0" y2="24.2" stroke="#fff" stroke-width="1.4"/>
<line x1="590.5" y1="24.2" x2="604.0" y2="24.2" stroke="#00e0f0" stroke-width="1.4"/>
<line x1="651.2" y1="24.0" x2="651.2" y2="565.0" stroke="#fff" stroke-width="2" shape-rendering="crispEdges"/>
<line x1="692.0" y1="24.0" x2="692.0" y2="565.0" stroke="#fff" stroke-width="2" shape-rendering="crispEdges"/>
<line x1="589.0" y1="565.0" x2="693.0" y2="565.0" stroke="#fff" stroke-width="2" shape-rendering="crispEdges"/>
<text class="d" x="593.0" y="34.0" font-size="7.5" fill="#fff" stroke="#fff" textLength="44.2" lengthAdjust="spacingAndGlyphs">Wind Speed</text>
<text class="d" x="593.0" y="44.0" font-size="7.5" fill="#fff" stroke="#fff">(knots)</text>
<text class="s" x="605.5" y="578.8" font-size="10" fill="#fff" stroke="#fff" text-anchor="middle">40</text>
<text class="s" x="623.8" y="578.8" font-size="10" fill="#fff" stroke="#fff" text-anchor="middle">80</text>
<text class="s" x="641.2" y="578.8" font-size="10" fill="#fff" stroke="#fff" text-anchor="middle">120</text>
<line x1="670.7" y1="25.0" x2="670.7" y2="564.0" stroke="#8c8c8c" stroke-width="2" stroke-dasharray="4 2.2"/>
<text class="d" x="654.0" y="34.0" font-size="7.6" fill="#fff" stroke="#fff" textLength="34.4" lengthAdjust="spacingAndGlyphs">Inf. Temp.</text>
<text class="d" x="654.0" y="44.0" font-size="7.6" fill="#fff" stroke="#fff" textLength="30.8" lengthAdjust="spacingAndGlyphs">Adv. (C/</text>
<text class="d" x="654.0" y="54.0" font-size="7.6" fill="#fff" stroke="#fff">hr)</text>
<line x1="671.7" y1="77.5" x2="671.7" y2="212.5" stroke="#f00000" stroke-width="1.4"/>
<line x1="671.0" y1="212.5" x2="671.0" y2="296.0" stroke="#3c96d2" stroke-width="2"/>
<rect x="669.5" y="296.0" width="2.5" height="62.0" fill="none" stroke="#3c96d2" stroke-width="1"/>
<line x1="671.8" y1="357.5" x2="671.8" y2="446.0" stroke="#f00000" stroke-width="2"/>
<line x1="671.3" y1="446.0" x2="671.3" y2="480.6" stroke="#f00000" stroke-width="1.5"/>
<line x1="671.3" y1="480.6" x2="671.3" y2="510.0" stroke="#3c96d2" stroke-width="1.5"/>
<rect x="671.0" y="510.0" width="3.6" height="26.8" fill="none" stroke="#f00000" stroke-width="1"/>
<text class="d" x="675.5" y="151.5" font-size="7.6" fill="#f00000" stroke="#f00000">0.2</text>
<text class="d" x="653.0" y="261.0" font-size="7.6" fill="#3c96d2" stroke="#3c96d2" textLength="15" lengthAdjust="spacingAndGlyphs">- 0.9</text>
<text class="d" x="653.0" y="334.0" font-size="7.6" fill="#3c96d2" stroke="#3c96d2" textLength="15" lengthAdjust="spacingAndGlyphs">- 1.6</text>
<text class="d" x="675.5" y="389.0" font-size="7.6" fill="#f00000" stroke="#f00000">0.4</text>
<text class="d" x="675.5" y="433.0" font-size="7.6" fill="#f00000" stroke="#f00000">0.6</text>
<text class="d" x="675.5" y="470.0" font-size="7.6" fill="#f00000" stroke="#f00000">0.2</text>
<text class="d" x="653.0" y="502.0" font-size="7.6" fill="#3c96d2" stroke="#3c96d2" textLength="15" lengthAdjust="spacingAndGlyphs">- 0.3</text>
<text class="d" x="675.5" y="530.0" font-size="7.6" fill="#f00000" stroke="#f00000">2.1</text>
<defs><clipPath id="cH"><rect x="692.0" y="24.5" width="486.5" height="407.5"/></clipPath></defs>
<g clip-path="url(#cH)">
<circle cx="935.5" cy="228.3" r="30.4" fill="none" stroke="#5e5e5e" stroke-width="1" stroke-dasharray="4.2 2.8"/>
<circle cx="935.5" cy="228.3" r="60.8" fill="none" stroke="#5e5e5e" stroke-width="1" stroke-dasharray="4.2 2.8"/>
<circle cx="935.5" cy="228.3" r="91.2" fill="none" stroke="#5e5e5e" stroke-width="1" stroke-dasharray="4.2 2.8"/>
<circle cx="935.5" cy="228.3" r="121.6" fill="none" stroke="#5e5e5e" stroke-width="1" stroke-dasharray="4.2 2.8"/>
<circle cx="935.5" cy="228.3" r="152.0" fill="none" stroke="#5e5e5e" stroke-width="1" stroke-dasharray="4.2 2.8"/>
<circle cx="935.5" cy="228.3" r="182.4" fill="none" stroke="#5e5e5e" stroke-width="1" stroke-dasharray="4.2 2.8"/>
<circle cx="935.5" cy="228.3" r="212.8" fill="none" stroke="#5e5e5e" stroke-width="1" stroke-dasharray="4.2 2.8"/>
<circle cx="935.5" cy="228.3" r="243.2" fill="none" stroke="#5e5e5e" stroke-width="1" stroke-dasharray="4.2 2.8"/>
<circle cx="935.5" cy="228.3" r="273.6" fill="none" stroke="#5e5e5e" stroke-width="1" stroke-dasharray="4.2 2.8"/>
<circle cx="935.5" cy="228.3" r="304.0" fill="none" stroke="#5e5e5e" stroke-width="1" stroke-dasharray="4.2 2.8"/>
<circle cx="935.5" cy="228.3" r="334.4" fill="none" stroke="#5e5e5e" stroke-width="1" stroke-dasharray="4.2 2.8"/>
<circle cx="935.5" cy="228.3" r="364.8" fill="none" stroke="#5e5e5e" stroke-width="1" stroke-dasharray="4.2 2.8"/>
<circle cx="935.5" cy="228.3" r="395.2" fill="none" stroke="#5e5e5e" stroke-width="1" stroke-dasharray="4.2 2.8"/>
<line x1="692.0" y1="228.3" x2="1178.5" y2="228.3" stroke="#505050" stroke-width="1.8" stroke-dasharray="3.4 2.6"/>
<line x1="935.5" y1="24.5" x2="935.5" y2="432.0" stroke="#505050" stroke-width="1.8" stroke-dasharray="3.4 2.6"/>
<text class="s" x="906.7" y="244.9" font-size="11" fill="#fff" stroke="#fff" text-anchor="middle">10</text>
<text class="s" x="967.5" y="244.9" font-size="11" fill="#fff" stroke="#fff" text-anchor="middle">10</text>
<text class="s" x="941.5" y="203.9" font-size="11" fill="#fff" stroke="#fff">10</text>
<text class="s" x="941.5" y="264.7" font-size="11" fill="#fff" stroke="#fff">10</text>
<text class="s" x="876.3" y="244.9" font-size="11" fill="#fff" stroke="#fff" text-anchor="middle">20</text>
<text class="s" x="997.9" y="244.9" font-size="11" fill="#fff" stroke="#fff" text-anchor="middle">20</text>
<text class="s" x="941.5" y="173.5" font-size="11" fill="#fff" stroke="#fff">20</text>
<text class="s" x="941.5" y="295.1" font-size="11" fill="#fff" stroke="#fff">20</text>
<text class="s" x="845.9" y="244.9" font-size="11" fill="#fff" stroke="#fff" text-anchor="middle">30</text>
<text class="s" x="1028.3" y="244.9" font-size="11" fill="#fff" stroke="#fff" text-anchor="middle">30</text>
<text class="s" x="941.5" y="143.1" font-size="11" fill="#fff" stroke="#fff">30</text>
<text class="s" x="941.5" y="325.5" font-size="11" fill="#fff" stroke="#fff">30</text>
<text class="s" x="815.5" y="244.9" font-size="11" fill="#fff" stroke="#fff" text-anchor="middle">40</text>
<text class="s" x="1058.7" y="244.9" font-size="11" fill="#fff" stroke="#fff" text-anchor="middle">40</text>
<text class="s" x="941.5" y="112.7" font-size="11" fill="#fff" stroke="#fff">40</text>
<text class="s" x="941.5" y="355.9" font-size="11" fill="#fff" stroke="#fff">40</text>
<text class="s" x="785.1" y="244.9" font-size="11" fill="#fff" stroke="#fff" text-anchor="middle">50</text>
<text class="s" x="1089.1" y="244.9" font-size="11" fill="#fff" stroke="#fff" text-anchor="middle">50</text>
<text class="s" x="941.5" y="82.3" font-size="11" fill="#fff" stroke="#fff">50</text>
<text class="s" x="941.5" y="386.3" font-size="11" fill="#fff" stroke="#fff">50</text>
<text class="s" x="754.7" y="244.9" font-size="11" fill="#fff" stroke="#fff" text-anchor="middle">60</text>
<text class="s" x="1119.5" y="244.9" font-size="11" fill="#fff" stroke="#fff" text-anchor="middle">60</text>
<text class="s" x="941.5" y="51.9" font-size="11" fill="#fff" stroke="#fff">60</text>
<text class="s" x="941.5" y="416.7" font-size="11" fill="#fff" stroke="#fff">60</text>
<text class="s" x="724.3" y="244.9" font-size="11" fill="#fff" stroke="#fff" text-anchor="middle">70</text>
<text class="s" x="1149.9" y="244.9" font-size="11" fill="#fff" stroke="#fff" text-anchor="middle">70</text>
<text class="s" x="693.9" y="244.9" font-size="11" fill="#fff" stroke="#fff" text-anchor="middle">80</text>
<text class="s" x="1180.3" y="244.9" font-size="11" fill="#fff" stroke="#fff" text-anchor="middle">80</text>
</g>
<polyline points="876.7,243.8 878.0,232.0 881.1,218.0 887.0,208.0 895.8,198.9 900.0,197.4 915.3,191.3 922.7,190.5 946.7,202.8" fill="none" stroke="#ff00ff" stroke-width="2" stroke-linejoin="round" stroke-linecap="round"/>
<polyline points="946.7,202.8 945.7,196.0 935.6,184.9 943.4,182.1" fill="none" stroke="#ff0000" stroke-width="2" stroke-linejoin="round" stroke-linecap="round"/>
<polyline points="943.4,182.1 952.1,179.8 959.0,178.7 962.8,179.8 969.0,179.8 979.7,168.3 992.0,157.3" fill="none" stroke="#00ee00" stroke-width="2" stroke-linejoin="round" stroke-linecap="round"/>
<polyline points="992.0,157.3 1000.2,150.7 1000.6,124.8 994.4,106.9 979.2,72.9 976.9,71.5 979.2,66.7 966.7,51.5 975.0,76.0 983.6,100.6" fill="none" stroke="#ffee00" stroke-width="2" stroke-linejoin="round" stroke-linecap="round"/>
<polyline points="983.6,100.6 988.1,114.0 956.8,107.8 966.7,158.8 968.4,144.4" fill="none" stroke="#00e8f0" stroke-width="2" stroke-linejoin="round" stroke-linecap="round"/>
<circle cx="919.3" cy="151" r="3.1" fill="none" stroke="#1e8fd8" stroke-width="1"/>
<text class="s" x="923.5" y="166.0" font-size="10.5" fill="#1e8fd8" stroke="#1e8fd8">168/26 LM</text>
<circle cx="998" cy="137.2" r="3.1" fill="none" stroke="#fff" stroke-width="1"/>
<text class="s" x="1001.6" y="148.8" font-size="10.5" fill="#fff" stroke="#fff">DN=215/36</text>
<rect x="942.0" y="185.3" width="7.4" height="7.4" fill="none" stroke="#c08408" stroke-width="1.8"/>
<text class="s" x="951.0" y="196.0" font-size="10.5" fill="#b8860b" stroke="#b8860b">194/16</text>
<circle cx="971.3" cy="195.4" r="3.1" fill="none" stroke="#fff" stroke-width="1"/>
<text class="s" x="975.7" y="207.6" font-size="10.5" fill="#fff" stroke="#fff">UP=228/16</text>
<circle cx="972.8" cy="222.4" r="3.1" fill="none" stroke="#e05a5a" stroke-width="1"/>
<text class="s" x="976.0" y="237.3" font-size="10.5" fill="#e86464" stroke="#e86464">262/12 RM</text>
<line x1="692.0" y1="24.5" x2="1178.5" y2="24.5" stroke="#fff" stroke-width="1.2" shape-rendering="crispEdges"/>
<line x1="1178.5" y1="24.5" x2="1178.5" y2="565.0" stroke="#fff" stroke-width="1.2" shape-rendering="crispEdges"/>
<line x1="751.9" y1="432.0" x2="751.9" y2="564.5" stroke="#0a3f80" stroke-width="1.3"/>
<line x1="692.0" y1="498.2" x2="813.0" y2="498.2" stroke="#0a3f80" stroke-width="1.3"/>
<line x1="751.6" y1="498.2" x2="782.6" y2="493.9" stroke="#fff" stroke-width="2" stroke-linecap="round"/>
<text class="s" x="806.5" y="444.0" font-size="10.6" fill="#fff" stroke="#fff" text-anchor="end">-- deg</text>
<text class="s" x="697.5" y="561.5" font-size="10.4" fill="#fff" stroke="#fff">Storm Slinky</text>
<line x1="814.0" y1="452.5" x2="819.0" y2="452.5" stroke="#fff" stroke-width="1.6"/>
<line x1="929.5" y1="452.5" x2="934.5" y2="452.5" stroke="#fff" stroke-width="1.6"/>
<text class="s" x="819.3" y="455.8" font-size="8.6" fill="#fff" stroke="#fff">500</text>
<line x1="814.0" y1="473.7" x2="819.0" y2="473.7" stroke="#fff" stroke-width="1.6"/>
<line x1="929.5" y1="473.7" x2="934.5" y2="473.7" stroke="#fff" stroke-width="1.6"/>
<text class="s" x="819.3" y="477.0" font-size="8.6" fill="#fff" stroke="#fff">600</text>
<line x1="814.0" y1="494.6" x2="819.0" y2="494.6" stroke="#fff" stroke-width="1.6"/>
<line x1="929.5" y1="494.6" x2="934.5" y2="494.6" stroke="#fff" stroke-width="1.6"/>
<text class="s" x="819.3" y="497.9" font-size="8.6" fill="#fff" stroke="#fff">700</text>
<line x1="814.0" y1="516.6" x2="819.0" y2="516.6" stroke="#fff" stroke-width="1.6"/>
<line x1="929.5" y1="516.6" x2="934.5" y2="516.6" stroke="#fff" stroke-width="1.6"/>
<text class="s" x="819.3" y="519.9" font-size="8.6" fill="#fff" stroke="#fff">800</text>
<line x1="814.0" y1="537.7" x2="819.0" y2="537.7" stroke="#fff" stroke-width="1.6"/>
<line x1="929.5" y1="537.7" x2="934.5" y2="537.7" stroke="#fff" stroke-width="1.6"/>
<text class="s" x="819.3" y="541.0" font-size="8.6" fill="#fff" stroke="#fff">900</text>
<line x1="929.5" y1="558.9" x2="934.5" y2="558.9" stroke="#fff" stroke-width="1.6"/>
<text class="s" x="814.0" y="562.2" font-size="8.6" fill="#fff" stroke="#fff">1000</text>
<line x1="820.3" y1="432.5" x2="820.3" y2="437.5" stroke="#fff" stroke-width="1.6"/>
<line x1="820.3" y1="559.5" x2="820.3" y2="564.0" stroke="#fff" stroke-width="1.6"/>
<line x1="846.8" y1="432.5" x2="846.8" y2="437.5" stroke="#fff" stroke-width="1.6"/>
<line x1="846.8" y1="559.5" x2="846.8" y2="564.0" stroke="#fff" stroke-width="1.6"/>
<line x1="872.6" y1="432.5" x2="872.6" y2="437.5" stroke="#fff" stroke-width="1.6"/>
<line x1="872.6" y1="559.5" x2="872.6" y2="564.0" stroke="#fff" stroke-width="1.6"/>
<line x1="898.7" y1="432.5" x2="898.7" y2="437.5" stroke="#fff" stroke-width="1.6"/>
<line x1="898.7" y1="559.5" x2="898.7" y2="564.0" stroke="#fff" stroke-width="1.6"/>
<line x1="924.7" y1="432.5" x2="924.7" y2="437.5" stroke="#fff" stroke-width="1.6"/>
<line x1="924.7" y1="559.5" x2="924.7" y2="564.0" stroke="#fff" stroke-width="1.6"/>
<defs><clipPath id="cE"><rect x="814" y="432" width="120.5" height="132"/></clipPath></defs>
<g clip-path="url(#cE)">
<text class="s" x="829.0" y="558.0" font-size="8.6" fill="#fff" stroke="#fff" text-anchor="middle">270</text>
<text class="s" x="854.5" y="558.0" font-size="8.6" fill="#fff" stroke="#fff" text-anchor="middle">280</text>
<text class="s" x="880.5" y="558.0" font-size="8.6" fill="#fff" stroke="#fff" text-anchor="middle">290</text>
<text class="s" x="906.5" y="558.0" font-size="8.6" fill="#fff" stroke="#fff" text-anchor="middle">300</text>
<text class="s" x="933.3" y="558.0" font-size="8.6" fill="#fff" stroke="#fff" text-anchor="middle">310</text>
<polyline points="920.9,432.4 918.8,445.1 916.7,451.5 918.8,453.6 917.8,465.3 913.5,473.7 912.9,485.4 910.3,491.7 902.9,494.5 893.8,501.3 893.4,514.0 891.3,517.2 893.0,521.4 887.0,532.6 879.6,536.9 837.2,544.1" fill="none" stroke="#ffff00" stroke-width="1.8" stroke-linejoin="round"/>
</g>
<text class="d" x="873.0" y="465.0" font-size="7.6" fill="#fff" stroke="#fff" text-anchor="middle">Theta-E</text>
<text class="d" x="873.0" y="475.0" font-size="7.6" fill="#fff" stroke="#fff" text-anchor="middle">v.</text>
<text class="d" x="873.0" y="485.0" font-size="7.6" fill="#fff" stroke="#fff" text-anchor="middle">Pres</text>
<line x1="936.5" y1="446.2" x2="941.0" y2="446.2" stroke="#fff" stroke-width="1.6"/>
<line x1="1051.5" y1="446.2" x2="1056.0" y2="446.2" stroke="#fff" stroke-width="1.6"/>
<text class="s" x="951.0" y="449.4" font-size="8.2" fill="#fff" stroke="#fff" text-anchor="middle">14</text>
<line x1="936.5" y1="462.7" x2="941.0" y2="462.7" stroke="#fff" stroke-width="1.6"/>
<line x1="1051.5" y1="462.7" x2="1056.0" y2="462.7" stroke="#fff" stroke-width="1.6"/>
<text class="s" x="951.0" y="465.9" font-size="8.2" fill="#fff" stroke="#fff" text-anchor="middle">12</text>
<line x1="936.5" y1="479.0" x2="941.0" y2="479.0" stroke="#fff" stroke-width="1.6"/>
<line x1="1051.5" y1="479.0" x2="1056.0" y2="479.0" stroke="#fff" stroke-width="1.6"/>
<text class="s" x="951.0" y="482.2" font-size="8.2" fill="#fff" stroke="#fff" text-anchor="middle">10</text>
<line x1="936.5" y1="495.5" x2="941.0" y2="495.5" stroke="#fff" stroke-width="1.6"/>
<line x1="1051.5" y1="495.5" x2="1056.0" y2="495.5" stroke="#fff" stroke-width="1.6"/>
<text class="s" x="951.0" y="498.7" font-size="8.2" fill="#fff" stroke="#fff" text-anchor="middle">8</text>
<line x1="936.5" y1="512.5" x2="941.0" y2="512.5" stroke="#fff" stroke-width="1.6"/>
<line x1="1051.5" y1="512.5" x2="1056.0" y2="512.5" stroke="#fff" stroke-width="1.6"/>
<text class="s" x="951.0" y="515.7" font-size="8.2" fill="#fff" stroke="#fff" text-anchor="middle">6</text>
<line x1="936.5" y1="528.8" x2="941.0" y2="528.8" stroke="#fff" stroke-width="1.6"/>
<line x1="1051.5" y1="528.8" x2="1056.0" y2="528.8" stroke="#fff" stroke-width="1.6"/>
<text class="s" x="951.0" y="532.0" font-size="8.2" fill="#fff" stroke="#fff" text-anchor="middle">4</text>
<line x1="936.5" y1="545.8" x2="941.0" y2="545.8" stroke="#fff" stroke-width="1.6"/>
<line x1="1051.5" y1="545.8" x2="1056.0" y2="545.8" stroke="#fff" stroke-width="1.6"/>
<text class="s" x="951.0" y="549.0" font-size="8.2" fill="#fff" stroke="#fff" text-anchor="middle">2</text>
<line x1="951.2" y1="432.5" x2="951.2" y2="437.5" stroke="#fff" stroke-width="1.6"/>
<line x1="951.2" y1="559.5" x2="951.2" y2="564.0" stroke="#fff" stroke-width="1.6"/>
<line x1="967.7" y1="432.5" x2="967.7" y2="437.5" stroke="#fff" stroke-width="1.6"/>
<line x1="967.7" y1="559.5" x2="967.7" y2="564.0" stroke="#fff" stroke-width="1.6"/>
<line x1="984.0" y1="432.5" x2="984.0" y2="437.5" stroke="#fff" stroke-width="1.6"/>
<line x1="984.0" y1="559.5" x2="984.0" y2="564.0" stroke="#fff" stroke-width="1.6"/>
<line x1="1001.0" y1="432.5" x2="1001.0" y2="437.5" stroke="#fff" stroke-width="1.6"/>
<line x1="1001.0" y1="559.5" x2="1001.0" y2="564.0" stroke="#fff" stroke-width="1.6"/>
<line x1="1017.5" y1="432.5" x2="1017.5" y2="437.5" stroke="#fff" stroke-width="1.6"/>
<line x1="1017.5" y1="559.5" x2="1017.5" y2="564.0" stroke="#fff" stroke-width="1.6"/>
<line x1="1033.8" y1="432.5" x2="1033.8" y2="437.5" stroke="#fff" stroke-width="1.6"/>
<line x1="1033.8" y1="559.5" x2="1033.8" y2="564.0" stroke="#fff" stroke-width="1.6"/>
<line x1="1050.8" y1="432.5" x2="1050.8" y2="437.5" stroke="#fff" stroke-width="1.6"/>
<line x1="1050.8" y1="559.5" x2="1050.8" y2="564.0" stroke="#fff" stroke-width="1.6"/>
<line x1="958.8" y1="433.0" x2="958.8" y2="564.0" stroke="#a4a4a4" stroke-width="1.6" stroke-dasharray="3.4 3"/>
<line x1="961.9" y1="518.0" x2="961.9" y2="564.0" stroke="#8b0000" stroke-width="1.4"/>
<line x1="1001.0" y1="433.0" x2="1001.0" y2="496.0" stroke="#7a007a" stroke-width="1.6" stroke-dasharray="4 2"/>
<line x1="1050.8" y1="433.0" x2="1050.8" y2="496.0" stroke="#7a007a" stroke-width="1.6" stroke-dasharray="4 2"/>
<text class="d" x="1021.8" y="457.0" font-size="7.2" fill="#c400c4" stroke="#c400c4" text-anchor="middle">Classic</text>
<text class="d" x="1021.8" y="467.0" font-size="7.2" fill="#c400c4" stroke="#c400c4" text-anchor="middle">Supercell</text>
<text class="d" x="973.5" y="448.0" font-size="7.6" fill="#fff" stroke="#fff" text-anchor="middle">SR Wind</text>
<text class="d" x="973.5" y="458.0" font-size="7.6" fill="#fff" stroke="#fff" text-anchor="middle">v.</text>
<text class="d" x="973.5" y="468.0" font-size="7.6" fill="#fff" stroke="#fff" text-anchor="middle">Height</text>
<defs><clipPath id="cS"><rect x="936" y="432" width="120.5" height="132"/></clipPath></defs>
<g clip-path="url(#cS)">
<polyline points="977.0,433.5 980.0,445.0 983.0,456.8 975.0,464.0 968.1,470.6 975.0,474.0 997.8,483.3 994.6,486.0 1028.5,492.4 1019.0,493.9 1000.0,499.5 983.0,506.6 973.0,511.5 965.0,517.2 957.5,523.5 959.7,530.9 963.5,542.6 959.7,547.9 951.2,556.8 988.3,562.3" fill="none" stroke="#f00000" stroke-width="1.8" stroke-linejoin="round"/>
</g>
<line x1="986.1" y1="470.0" x2="986.1" y2="488.6" stroke="#a020f0" stroke-width="2"/>
<line x1="961.2" y1="511.9" x2="961.2" y2="529.9" stroke="#6aa0ee" stroke-width="2"/>
<text class="s" x="1117.5" y="446.8" font-size="10.6" fill="#fff" stroke="#fff" text-anchor="middle" textLength="99.6" lengthAdjust="spacingAndGlyphs">Potential Hazard Type</text>
<line x1="1057.0" y1="452.0" x2="1178.0" y2="452.0" stroke="#fff" stroke-width="1.6" shape-rendering="crispEdges"/>
<text class="s" x="1117.6" y="500.8" font-size="14" fill="#5fe01f" stroke="#5fe01f" text-anchor="middle">FLASH</text>
<text class="s" x="1117.6" y="516.6" font-size="14" fill="#5fe01f" stroke="#5fe01f" text-anchor="middle">FLOOD</text>
<line x1="692.0" y1="431.0" x2="692.0" y2="565.5" stroke="#fff" stroke-width="2" shape-rendering="crispEdges"/>
<line x1="813.2" y1="431.0" x2="813.2" y2="565.5" stroke="#fff" stroke-width="2" shape-rendering="crispEdges"/>
<line x1="935.3" y1="431.0" x2="935.3" y2="565.5" stroke="#fff" stroke-width="2" shape-rendering="crispEdges"/>
<line x1="1056.7" y1="431.0" x2="1056.7" y2="565.5" stroke="#fff" stroke-width="2" shape-rendering="crispEdges"/>
<line x1="692.5" y1="432.0" x2="1179.0" y2="432.0" stroke="#fff" stroke-width="2" shape-rendering="crispEdges"/>
<line x1="692.5" y1="565.0" x2="1179.0" y2="565.0" stroke="#fff" stroke-width="2" shape-rendering="crispEdges"/>
<rect x="2.5" y="588.5" width="1175.5" height="193.0" fill="none" stroke="#38a0dc" stroke-width="3" shape-rendering="crispEdges"/>
<line x1="4.0" y1="601.5" x2="297.0" y2="601.5" stroke="#fff" stroke-width="1" shape-rendering="crispEdges"/>
<line x1="4.0" y1="652.6" x2="297.0" y2="652.6" stroke="#fff" stroke-width="1.6" shape-rendering="crispEdges"/>
<line x1="4.0" y1="723.2" x2="297.0" y2="723.2" stroke="#fff" stroke-width="1.2" shape-rendering="crispEdges"/>
<line x1="204.7" y1="723.0" x2="204.7" y2="780.0" stroke="#fff" stroke-width="1.2" shape-rendering="crispEdges"/>
<defs><clipPath id="cP"><rect x="3" y="589" width="294" height="12.3"/></clipPath></defs>
<g clip-path="url(#cP)">
<text class="s" x="40.2" y="601.2" font-size="10.6" fill="#fff" stroke="#fff" text-anchor="middle">PCL</text>
<text class="s" x="76.5" y="601.2" font-size="10.6" fill="#fff" stroke="#fff" text-anchor="middle">CAPE</text>
<text class="s" x="113.3" y="601.2" font-size="10.6" fill="#fff" stroke="#fff" text-anchor="middle">CINH</text>
<text class="s" x="149.0" y="601.2" font-size="10.6" fill="#fff" stroke="#fff" text-anchor="middle">LCL</text>
<text class="s" x="186.7" y="601.2" font-size="10.6" fill="#fff" stroke="#fff" text-anchor="middle">LI</text>
<text class="s" x="223.0" y="601.2" font-size="10.6" fill="#fff" stroke="#fff" text-anchor="middle">LFC</text>
<text class="s" x="260.0" y="601.2" font-size="10.6" fill="#fff" stroke="#fff" text-anchor="middle">EL</text>
</g>
<text class="s" x="40.2" y="615.8" font-size="10.6" fill="#fff" stroke="#fff" text-anchor="middle">SFC</text>
<text class="s" x="76.5" y="615.8" font-size="10.6" fill="#fff" stroke="#fff" text-anchor="middle">0</text>
<text class="s" x="113.3" y="615.8" font-size="10.6" fill="#fff" stroke="#fff" text-anchor="middle">0</text>
<text class="s" x="149.0" y="615.8" font-size="10.6" fill="#fff" stroke="#fff" text-anchor="middle">177</text>
<text class="s" x="186.7" y="615.8" font-size="10.6" fill="#fff" stroke="#fff" text-anchor="middle">23</text>
<text class="s" x="223.0" y="615.8" font-size="10.6" fill="#fff" stroke="#fff" text-anchor="middle">--</text>
<text class="s" x="260.0" y="615.8" font-size="10.6" fill="#fff" stroke="#fff" text-anchor="middle">177</text>
<text class="s" x="40.2" y="626.7" font-size="10.6" fill="#fff" stroke="#fff" text-anchor="middle">EFF</text>
<text class="s" x="76.5" y="626.7" font-size="10.6" fill="#fff" stroke="#fff" text-anchor="middle">0</text>
<text class="s" x="113.3" y="626.7" font-size="10.6" fill="#fff" stroke="#fff" text-anchor="middle">0</text>
<text class="s" x="149.0" y="626.7" font-size="10.6" fill="#fff" stroke="#fff" text-anchor="middle">177</text>
<text class="s" x="186.7" y="626.7" font-size="10.6" fill="#fff" stroke="#fff" text-anchor="middle">23</text>
<text class="s" x="223.0" y="626.7" font-size="10.6" fill="#fff" stroke="#fff" text-anchor="middle">--</text>
<text class="s" x="260.0" y="626.7" font-size="10.6" fill="#fff" stroke="#fff" text-anchor="middle">177</text>
<text class="s" x="40.2" y="637.6" font-size="10.6" fill="#00d8f0" stroke="#00d8f0" text-anchor="middle">ML</text>
<text class="s" x="76.5" y="637.6" font-size="10.6" fill="#fff" stroke="#fff" text-anchor="middle">0</text>
<text class="s" x="113.3" y="637.6" font-size="10.6" fill="#fff" stroke="#fff" text-anchor="middle">0</text>
<text class="s" x="149.0" y="637.6" font-size="10.6" fill="#fff" stroke="#fff" text-anchor="middle">701</text>
<text class="s" x="186.7" y="637.6" font-size="10.6" fill="#fff" stroke="#fff" text-anchor="middle">12</text>
<text class="s" x="223.0" y="637.6" font-size="10.6" fill="#fff" stroke="#fff" text-anchor="middle">--</text>
<text class="s" x="260.0" y="637.6" font-size="10.6" fill="#fff" stroke="#fff" text-anchor="middle">701</text>
<text class="s" x="40.2" y="648.7" font-size="10.6" fill="#fff" stroke="#fff" text-anchor="middle">MU</text>
<text class="s" x="76.5" y="648.7" font-size="10.6" fill="#fff" stroke="#fff" text-anchor="middle">0</text>
<text class="s" x="113.3" y="648.7" font-size="10.6" fill="#fff" stroke="#fff" text-anchor="middle">0</text>
<text class="s" x="149.0" y="648.7" font-size="10.6" fill="#fff" stroke="#fff" text-anchor="middle">3019</text>
<text class="s" x="186.7" y="648.7" font-size="10.6" fill="#fff" stroke="#fff" text-anchor="middle">2</text>
<text class="s" x="223.0" y="648.7" font-size="10.6" fill="#fff" stroke="#fff" text-anchor="middle">3248</text>
<text class="s" x="260.0" y="648.7" font-size="10.6" fill="#fff" stroke="#fff" text-anchor="middle">3423</text>
<rect x="5.8" y="628.4" width="295.0" height="11.0" fill="none" stroke="#63401c" stroke-width="1"/>
<text class="s" x="9.7" y="665.3" font-size="10.6" fill="#5fb31f" stroke="#5fb31f" textLength="88.2" lengthAdjust="spacingAndGlyphs">PW = 0.45in (2-3σ)</text>
<text class="s" x="106.3" y="665.3" font-size="10.6" fill="#fff" stroke="#fff" textLength="28.5" lengthAdjust="spacingAndGlyphs">K = 20</text>
<text class="s" x="180.5" y="665.3" font-size="10.6" fill="#fff" stroke="#fff" textLength="57.7" lengthAdjust="spacingAndGlyphs">WNDG = 0.0</text>
<text class="s" x="9.7" y="676.0" font-size="10.6" fill="#fff" stroke="#fff" textLength="78.8" lengthAdjust="spacingAndGlyphs">MeanW = 3.3g/kg</text>
<text class="s" x="106.3" y="676.0" font-size="10.6" fill="#fff" stroke="#fff" textLength="31.8" lengthAdjust="spacingAndGlyphs">TT = 44</text>
<text class="s" x="180.5" y="676.0" font-size="10.6" fill="#fff" stroke="#fff" textLength="35.1" lengthAdjust="spacingAndGlyphs">TEI = 31</text>
<text class="s" x="9.7" y="686.7" font-size="10.6" fill="#fff" stroke="#fff" textLength="65.3" lengthAdjust="spacingAndGlyphs">LowRH = 83%</text>
<text class="s" x="106.3" y="686.7" font-size="10.6" fill="#fff" stroke="#fff" textLength="55.7" lengthAdjust="spacingAndGlyphs">ConvT = --F</text>
<text class="s" x="180.5" y="686.7" font-size="10.6" fill="#fff" stroke="#fff" textLength="50.3" lengthAdjust="spacingAndGlyphs">3CAPE = 0</text>
<text class="s" x="9.7" y="697.3" font-size="10.6" fill="#fff" stroke="#fff" textLength="62.3" lengthAdjust="spacingAndGlyphs">MidRH = 96%</text>
<text class="s" x="106.3" y="697.3" font-size="10.6" fill="#fff" stroke="#fff" textLength="52.6" lengthAdjust="spacingAndGlyphs">maxT = 48F</text>
<text class="s" x="180.5" y="697.3" font-size="10.6" fill="#fff" stroke="#fff" textLength="58.5" lengthAdjust="spacingAndGlyphs">MBURST = 0</text>
<text class="s" x="9.7" y="708.0" font-size="10.6" fill="#fff" stroke="#fff" textLength="62.8" lengthAdjust="spacingAndGlyphs">DCAPE = -43</text>
<text class="s" x="106.3" y="708.0" font-size="10.6" fill="#fff" stroke="#fff" textLength="36.9" lengthAdjust="spacingAndGlyphs">ESP = 0</text>
<text class="s" x="9.7" y="718.7" font-size="10.6" fill="#fff" stroke="#fff" textLength="61.5" lengthAdjust="spacingAndGlyphs">DownT = 36F</text>
<text class="s" x="106.3" y="718.7" font-size="10.6" fill="#fff" stroke="#fff" textLength="50.1" lengthAdjust="spacingAndGlyphs">MMP = 0.0</text>
<text class="s" x="180.5" y="718.7" font-size="10.6" fill="#fff" stroke="#fff" textLength="78.8" lengthAdjust="spacingAndGlyphs">SigSvr = 0 m3/s3</text>
<text class="s" x="9.2" y="735.3" font-size="10.6" fill="#22e222" stroke="#22e222" textLength="130.7" lengthAdjust="spacingAndGlyphs">Sfc-3km AGL LR = 1.4 C/km</text>
<text class="s" x="209.8" y="735.3" font-size="10.6" fill="#fff" stroke="#fff" textLength="65.5" lengthAdjust="spacingAndGlyphs">Supercell = 0.0</text>
<text class="s" x="9.2" y="746.3" font-size="10.6" fill="#ff9a1a" stroke="#ff9a1a" textLength="121" lengthAdjust="spacingAndGlyphs">3-6km AGL LR = 7.2 C/km</text>
<text class="s" x="209.8" y="746.3" font-size="10.6" fill="#fff" stroke="#fff" textLength="67.4" lengthAdjust="spacingAndGlyphs">STP (cin) = 0.0</text>
<text class="s" x="9.2" y="757.3" font-size="10.6" fill="#22e222" stroke="#22e222" textLength="121.8" lengthAdjust="spacingAndGlyphs">850-500mb LR = 5.8 C/km</text>
<text class="s" x="209.8" y="757.3" font-size="10.6" fill="#fff" stroke="#fff" textLength="66.1" lengthAdjust="spacingAndGlyphs">STP (fix) = 0.0</text>
<text class="s" x="9.2" y="768.3" font-size="10.6" fill="#22e222" stroke="#22e222" textLength="121.8" lengthAdjust="spacingAndGlyphs">700-500mb LR = 6.0 C/km</text>
<text class="s" x="209.8" y="768.3" font-size="10.6" fill="#fff" stroke="#fff" textLength="49.6" lengthAdjust="spacingAndGlyphs">SHIP = 0.0</text>
<line x1="299.0" y1="604.4" x2="589.5" y2="604.4" stroke="#fff" stroke-width="1.2" shape-rendering="crispEdges"/>
<text class="s" x="355.7" y="602.5" font-size="10.6" fill="#fff" stroke="#fff">SRH (m2/s2)</text>
<text class="s" x="435.8" y="602.5" font-size="10.6" fill="#fff" stroke="#fff">Shear (kt)</text>
<text class="s" x="498.9" y="602.5" font-size="10.6" fill="#fff" stroke="#fff" textLength="36.2" lengthAdjust="spacingAndGlyphs">MnWind</text>
<text class="s" x="559.3" y="602.5" font-size="10.6" fill="#fff" stroke="#fff" textLength="22.1" lengthAdjust="spacingAndGlyphs">SRW</text>
<defs><clipPath id="cK"><rect x="299" y="589" width="290.3" height="193"/></clipPath></defs>
<g clip-path="url(#cK)">
<text class="s" x="303.7" y="615.9" font-size="10.6" fill="#fff" stroke="#fff" textLength="42.6" lengthAdjust="spacingAndGlyphs">SFC-1km</text>
<text class="s" x="413.0" y="615.9" font-size="10.6" fill="#fff" stroke="#fff" text-anchor="end">162</text>
<text class="s" x="472.0" y="615.9" font-size="10.6" fill="#fff" stroke="#fff" text-anchor="end">27</text>
<text class="s" x="531.2" y="615.9" font-size="10.6" fill="#fff" stroke="#fff" text-anchor="end">142/9</text>
<text class="s" x="590.0" y="615.9" font-size="10.6" fill="#fff" stroke="#fff" text-anchor="end">107/19</text>
<text class="s" x="303.7" y="626.8" font-size="10.6" fill="#fff" stroke="#fff" textLength="42.6" lengthAdjust="spacingAndGlyphs">SFC-3km</text>
<text class="s" x="413.0" y="626.8" font-size="10.6" fill="#fff" stroke="#fff" text-anchor="end">177</text>
<text class="s" x="472.0" y="626.8" font-size="10.6" fill="#fff" stroke="#fff" text-anchor="end">30</text>
<text class="s" x="531.2" y="626.8" font-size="10.6" fill="#fff" stroke="#fff" text-anchor="end">172/11</text>
<text class="s" x="590.0" y="626.8" font-size="10.6" fill="#fff" stroke="#fff" text-anchor="end">123/16</text>
<text class="s" x="303.7" y="637.7" font-size="10.6" fill="#fff" stroke="#fff">Eff Inflow Layer</text>
<text class="s" x="413.0" y="637.7" font-size="10.6" fill="#fff" stroke="#fff" text-anchor="end">--</text>
<text class="s" x="472.0" y="637.7" font-size="10.6" fill="#fff" stroke="#fff" text-anchor="end">--</text>
<text class="s" x="531.2" y="637.7" font-size="10.6" fill="#fff" stroke="#fff" text-anchor="end">--/--</text>
<text class="s" x="590.0" y="637.7" font-size="10.6" fill="#fff" stroke="#fff" text-anchor="end">--/--</text>
<text class="s" x="303.7" y="653.5" font-size="10.6" fill="#fff" stroke="#fff" textLength="42.6" lengthAdjust="spacingAndGlyphs">SFC-6km</text>
<text class="s" x="472.0" y="653.5" font-size="10.6" fill="#fff" stroke="#fff" text-anchor="end">48</text>
<text class="s" x="531.2" y="653.5" font-size="10.6" fill="#fff" stroke="#fff" text-anchor="end">189/13</text>
<text class="s" x="590.0" y="653.5" font-size="10.6" fill="#fff" stroke="#fff" text-anchor="end">137/15</text>
<text class="s" x="303.7" y="664.5" font-size="10.6" fill="#fff" stroke="#fff" textLength="42.6" lengthAdjust="spacingAndGlyphs">SFC-8km</text>
<text class="s" x="472.0" y="664.5" font-size="10.6" fill="#fff" stroke="#fff" text-anchor="end">63</text>
<text class="s" x="531.2" y="664.5" font-size="10.6" fill="#fff" stroke="#fff" text-anchor="end">195/15</text>
<text class="s" x="590.0" y="664.5" font-size="10.6" fill="#fff" stroke="#fff" text-anchor="end">147/15</text>
<text class="s" x="303.7" y="675.3" font-size="10.6" fill="#cc8c12" stroke="#cc8c12">LCL-EL (Cloud Layer)</text>
<text class="s" x="472.0" y="675.3" font-size="10.6" fill="#fff" stroke="#fff" text-anchor="end">1</text>
<text class="s" x="531.2" y="675.3" font-size="10.6" fill="#cc8c12" stroke="#cc8c12" text-anchor="end">194/16</text>
<text class="s" x="590.0" y="675.3" font-size="10.6" fill="#fff" stroke="#fff" text-anchor="end">148/16</text>
<text class="s" x="303.7" y="686.1" font-size="10.6" fill="#fff" stroke="#fff" textLength="86.5" lengthAdjust="spacingAndGlyphs">Eff Shear (EBWD)</text>
<text class="s" x="472.0" y="686.1" font-size="10.6" fill="#fff" stroke="#fff" text-anchor="end">--</text>
<text class="s" x="531.2" y="686.1" font-size="10.6" fill="#fff" stroke="#fff" text-anchor="end">--/--</text>
<text class="s" x="590.0" y="686.1" font-size="10.6" fill="#fff" stroke="#fff" text-anchor="end">--/--</text>
</g>
<text class="s" x="303.7" y="702.7" font-size="10.6" fill="#fff" stroke="#fff" textLength="58.5" lengthAdjust="spacingAndGlyphs">BRN Shear =</text>
<text class="s" x="472.0" y="702.7" font-size="10.6" fill="#fff" stroke="#fff" text-anchor="end">36 m2/s2</text>
<text class="s" x="303.7" y="713.5" font-size="10.6" fill="#fff" stroke="#fff" textLength="78.3" lengthAdjust="spacingAndGlyphs">4-6km SR Wind =</text>
<text class="s" x="472.0" y="713.5" font-size="10.6" fill="#fff" stroke="#fff" text-anchor="end">170/14 kt</text>
<text class="s" x="303.7" y="729.8" font-size="10.6" fill="#fff" stroke="#fff" textLength="120.8" lengthAdjust="spacingAndGlyphs">...Storm Motion Vectors...</text>
<text class="s" x="303.7" y="740.3" font-size="10.6" fill="#e85c5c" stroke="#e85c5c" textLength="71.4" lengthAdjust="spacingAndGlyphs">Bunkers Right =</text>
<text class="s" x="472.0" y="740.3" font-size="10.6" fill="#e85c5c" stroke="#e85c5c" text-anchor="end">262/12 kt</text>
<text class="s" x="303.7" y="751.5" font-size="10.6" fill="#1e90d8" stroke="#1e90d8" textLength="65.6" lengthAdjust="spacingAndGlyphs">Bunkers Left =</text>
<text class="s" x="472.0" y="751.5" font-size="10.6" fill="#1e90d8" stroke="#1e90d8" text-anchor="end">168/26 kt</text>
<text class="s" x="303.7" y="762.2" font-size="10.6" fill="#fff" stroke="#fff" textLength="94.3" lengthAdjust="spacingAndGlyphs">Corfidi Downshear =</text>
<text class="s" x="472.0" y="762.2" font-size="10.6" fill="#fff" stroke="#fff" text-anchor="end">215/36 kt</text>
<text class="s" x="303.7" y="773.2" font-size="10.6" fill="#fff" stroke="#fff" textLength="80.3" lengthAdjust="spacingAndGlyphs">Corfidi Upshear =</text>
<text class="s" x="472.0" y="773.2" font-size="10.6" fill="#fff" stroke="#fff" text-anchor="end">228/16 kt</text>
<text class="s" x="531.7" y="762.2" font-size="10.6" fill="#fff" stroke="#fff" text-anchor="middle" textLength="75.0" lengthAdjust="spacingAndGlyphs">1km &amp; 6km AGL</text>
<text class="s" x="531.7" y="773.2" font-size="10.6" fill="#fff" stroke="#fff" text-anchor="middle" textLength="52.3" lengthAdjust="spacingAndGlyphs">Wind Barbs</text>
<line x1="532.7" y1="724.2" x2="516.4" y2="744.1" stroke="#7ed000" stroke-width="1.2"/>
<line x1="516.4" y1="744.1" x2="508.1" y2="737.2" stroke="#7ed000" stroke-width="1.2"/>
<line x1="518.5" y1="741.1" x2="511.1" y2="735.2" stroke="#7ed000" stroke-width="1.2"/>
<line x1="521.1" y1="737.2" x2="513.1" y2="730.5" stroke="#7ed000" stroke-width="1.2"/>
<line x1="532.7" y1="724.2" x2="523.7" y2="748.5" stroke="#00e6c0" stroke-width="1.2"/>
<line x1="523.7" y1="748.5" x2="514.3" y2="744.7" stroke="#00e6c0" stroke-width="1.2"/>
<text class="s" x="737.4" y="606.8" font-size="16" fill="#fff" stroke="#fff" text-anchor="middle" textLength="260" lengthAdjust="spacingAndGlyphs">SARS - Sounding Analogue System</text>
<line x1="591.3" y1="614.2" x2="884.0" y2="614.2" stroke="#fff" stroke-width="1.2" shape-rendering="crispEdges"/>
<line x1="738.7" y1="614.0" x2="738.7" y2="781.0" stroke="#fff" stroke-width="1.2" shape-rendering="crispEdges"/>
<text class="s" x="663.8" y="630.7" font-size="14" fill="#fff" stroke="#fff" text-anchor="middle">SUPERCELL</text>
<text class="s" x="811.0" y="630.7" font-size="14" fill="#fff" stroke="#fff" text-anchor="middle">SEVERE HAIL</text>
<text class="s" x="663.6" y="675.6" font-size="10.4" fill="#ffc81e" stroke="#ffc81e" text-anchor="middle" textLength="89" lengthAdjust="spacingAndGlyphs">No Quality Matches</text>
<text class="s" x="810.8" y="675.6" font-size="10.4" fill="#ffc81e" stroke="#ffc81e" text-anchor="middle" textLength="89" lengthAdjust="spacingAndGlyphs">No Quality Matches</text>
<text class="s" x="1030.9" y="602.8" font-size="12" fill="#fff" stroke="#fff" text-anchor="middle" textLength="168.5" lengthAdjust="spacingAndGlyphs">Effective Layer STP (with CIN)</text>
<line x1="885.0" y1="748.7" x2="1177.0" y2="748.7" stroke="#3a3a3a" stroke-width="1.6" stroke-dasharray="3 2.9"/>
<line x1="885.0" y1="734.6" x2="1177.0" y2="734.6" stroke="#3a3a3a" stroke-width="1.6" stroke-dasharray="3 2.9"/>
<line x1="885.0" y1="720.8" x2="1177.0" y2="720.8" stroke="#3a3a3a" stroke-width="1.6" stroke-dasharray="3 2.9"/>
<line x1="885.0" y1="707.9" x2="1177.0" y2="707.9" stroke="#3a3a3a" stroke-width="1.6" stroke-dasharray="3 2.9"/>
<line x1="885.0" y1="693.6" x2="1177.0" y2="693.6" stroke="#3a3a3a" stroke-width="1.6" stroke-dasharray="3 2.9"/>
<line x1="885.0" y1="679.7" x2="1177.0" y2="679.7" stroke="#3a3a3a" stroke-width="1.6" stroke-dasharray="3 2.9"/>
<line x1="885.0" y1="665.9" x2="1177.0" y2="665.9" stroke="#3a3a3a" stroke-width="1.6" stroke-dasharray="3 2.9"/>
<line x1="885.0" y1="652.9" x2="1177.0" y2="652.9" stroke="#3a3a3a" stroke-width="1.6" stroke-dasharray="3 2.9"/>
<line x1="885.0" y1="639.0" x2="1177.0" y2="639.0" stroke="#3a3a3a" stroke-width="1.6" stroke-dasharray="3 2.9"/>
<line x1="885.0" y1="625.0" x2="1177.0" y2="625.0" stroke="#3a3a3a" stroke-width="1.6" stroke-dasharray="3 2.9"/>
<line x1="885.0" y1="612.1" x2="1177.0" y2="612.1" stroke="#3a3a3a" stroke-width="1.6" stroke-dasharray="3 2.9"/>
<text class="s" x="894.6" y="767.1" font-size="10.6" fill="#fff" stroke="#fff" text-anchor="middle">0</text>
<text class="s" x="894.6" y="752.6" font-size="10.6" fill="#fff" stroke="#fff" text-anchor="middle">1</text>
<text class="s" x="894.6" y="738.5" font-size="10.6" fill="#fff" stroke="#fff" text-anchor="middle">2</text>
<text class="s" x="894.6" y="724.7" font-size="10.6" fill="#fff" stroke="#fff" text-anchor="middle">3</text>
<text class="s" x="894.6" y="711.8" font-size="10.6" fill="#fff" stroke="#fff" text-anchor="middle">4</text>
<text class="s" x="894.6" y="697.5" font-size="10.6" fill="#fff" stroke="#fff" text-anchor="middle">5</text>
<text class="s" x="894.6" y="683.6" font-size="10.6" fill="#fff" stroke="#fff" text-anchor="middle">6</text>
<text class="s" x="894.6" y="669.8" font-size="10.6" fill="#fff" stroke="#fff" text-anchor="middle">7</text>
<text class="s" x="894.6" y="656.8" font-size="10.6" fill="#fff" stroke="#fff" text-anchor="middle">8</text>
<text class="s" x="894.6" y="642.9" font-size="10.6" fill="#fff" stroke="#fff" text-anchor="middle">9</text>
<text class="s" x="894.6" y="628.9" font-size="10.6" fill="#fff" stroke="#fff" text-anchor="middle">10</text>
<text class="s" x="894.6" y="616.0" font-size="10.6" fill="#fff" stroke="#fff" text-anchor="middle">11</text>
<line x1="885.0" y1="763.2" x2="1177.0" y2="763.2" stroke="#20d0d0" stroke-width="2.2" shape-rendering="crispEdges"/>
<line x1="926.5" y1="611.1" x2="926.5" y2="648.7" stroke="#ff00ff" stroke-width="2"/>
<line x1="926.5" y1="727.3" x2="926.5" y2="746.5" stroke="#ff00ff" stroke-width="2"/>
<rect x="916.0" y="648.7" width="21.0" height="78.6" fill="none" stroke="#ff00ff" stroke-width="2"/>
<line x1="916.0" y1="689.7" x2="937.0" y2="689.7" stroke="#ff00ff" stroke-width="2"/>
<text class="s" x="926.5" y="775.7" font-size="10.6" fill="#fff" stroke="#fff" text-anchor="middle">EF4+</text>
<line x1="968.2" y1="646.1" x2="968.2" y2="700.6" stroke="#ff0000" stroke-width="2"/>
<line x1="968.2" y1="749.0" x2="968.2" y2="760.7" stroke="#ff0000" stroke-width="2"/>
<rect x="957.7" y="700.6" width="21.0" height="48.4" fill="none" stroke="#ff0000" stroke-width="2"/>
<line x1="957.7" y1="729.6" x2="978.7" y2="729.6" stroke="#ff0000" stroke-width="2"/>
<text class="s" x="968.2" y="775.7" font-size="10.6" fill="#fff" stroke="#fff" text-anchor="middle">EF3</text>
<line x1="1010.2" y1="685.0" x2="1010.2" y2="711.7" stroke="#ff8c1e" stroke-width="2"/>
<line x1="1010.2" y1="753.7" x2="1010.2" y2="762.8" stroke="#ff8c1e" stroke-width="2"/>
<rect x="999.7" y="711.7" width="21.0" height="42.0" fill="none" stroke="#ff8c1e" stroke-width="2"/>
<line x1="999.7" y1="739.2" x2="1020.7" y2="739.2" stroke="#ff8c1e" stroke-width="2"/>
<text class="s" x="1010.2" y="775.7" font-size="10.6" fill="#fff" stroke="#fff" text-anchor="middle">EF2</text>
<line x1="1051.9" y1="699.8" x2="1051.9" y2="726.7" stroke="#ffff00" stroke-width="2"/>
<line x1="1051.9" y1="758.4" x2="1051.9" y2="762.8" stroke="#ffff00" stroke-width="2"/>
<rect x="1041.4" y="726.7" width="21.0" height="31.7" fill="none" stroke="#ffff00" stroke-width="2"/>
<line x1="1041.4" y1="745.4" x2="1062.4" y2="745.4" stroke="#ffff00" stroke-width="2"/>
<text class="s" x="1051.9" y="775.7" font-size="10.6" fill="#fff" stroke="#fff" text-anchor="middle">EF1</text>
<line x1="1093.9" y1="711.5" x2="1093.9" y2="734.8" stroke="#ffff00" stroke-width="2"/>
<line x1="1093.9" y1="760.7" x2="1093.9" y2="762.8" stroke="#ffff00" stroke-width="2"/>
<rect x="1083.4" y="734.8" width="21.0" height="25.9" fill="none" stroke="#ffff00" stroke-width="2"/>
<line x1="1083.4" y1="751.6" x2="1104.4" y2="751.6" stroke="#ffff00" stroke-width="2"/>
<text class="s" x="1093.9" y="775.7" font-size="10.6" fill="#fff" stroke="#fff" text-anchor="middle">EF0</text>
<line x1="1135.9" y1="738.2" x2="1135.9" y2="752.7" stroke="#00f000" stroke-width="2"/>
<rect x="1125.4" y="752.7" width="21.0" height="9.6" fill="none" stroke="#00f000" stroke-width="2"/>
<line x1="1125.4" y1="759.4" x2="1146.4" y2="759.4" stroke="#00f000" stroke-width="2"/>
<text class="s" x="1135.9" y="775.7" font-size="10.6" fill="#fff" stroke="#fff" text-anchor="middle">NONTOR</text>
<rect x="1030.6" y="611.8" width="142.8" height="84.4" fill="#000" stroke="#fff" stroke-width="1.8"/>
<defs><clipPath id="cL"><rect x="1031" y="612" width="142" height="12.2"/></clipPath></defs>
<g clip-path="url(#cL)">
<text class="s" x="1034.5" y="623.8" font-size="10.6" fill="#fff" stroke="#fff" textLength="123.2" lengthAdjust="spacingAndGlyphs">Prob EF2+ Given Supercell</text>
</g>
<line x1="1030.6" y1="624.8" x2="1173.4" y2="624.8" stroke="#fff" stroke-width="1.2" shape-rendering="crispEdges"/>
<text class="s" x="1033.7" y="635.7" font-size="10.6" fill="#fff" stroke="#fff" textLength="76.5" lengthAdjust="spacingAndGlyphs">based on CAPE:</text>
<text class="s" x="1138.0" y="635.7" font-size="10.6" fill="#fff" stroke="#fff">0.0</text>
<text class="s" x="1033.7" y="646.7" font-size="10.6" fill="#ff00ff" stroke="#ff00ff" textLength="67.9" lengthAdjust="spacingAndGlyphs">based on LCL:</text>
<text class="s" x="1138.0" y="646.7" font-size="10.6" fill="#ff00ff" stroke="#ff00ff">0.19</text>
<text class="s" x="1033.7" y="657.7" font-size="10.6" fill="#fff" stroke="#fff" textLength="76.5" lengthAdjust="spacingAndGlyphs">based on ESRH:</text>
<text class="s" x="1138.0" y="657.7" font-size="10.6" fill="#fff" stroke="#fff">--</text>
<text class="s" x="1033.7" y="668.7" font-size="10.6" fill="#fff" stroke="#fff" textLength="78.8" lengthAdjust="spacingAndGlyphs">based on EBWD:</text>
<text class="s" x="1138.0" y="668.7" font-size="10.6" fill="#fff" stroke="#fff">--</text>
<text class="s" x="1033.7" y="679.7" font-size="10.6" fill="#fff" stroke="#fff" textLength="74.4" lengthAdjust="spacingAndGlyphs">based on STPC:</text>
<text class="s" x="1138.0" y="679.7" font-size="10.6" fill="#fff" stroke="#fff">0.06</text>
<text class="s" x="1033.7" y="690.7" font-size="10.6" fill="#fff" stroke="#fff" textLength="95.7" lengthAdjust="spacingAndGlyphs">based on STP_fixed:</text>
<text class="s" x="1138.0" y="690.7" font-size="10.6" fill="#fff" stroke="#fff">0.05</text>
<line x1="297.5" y1="588.0" x2="297.5" y2="782.0" stroke="#38a0dc" stroke-width="1.2" shape-rendering="crispEdges"/>
<line x1="590.5" y1="588.0" x2="590.5" y2="782.0" stroke="#38a0dc" stroke-width="1.2" shape-rendering="crispEdges"/>
<line x1="884.5" y1="588.0" x2="884.5" y2="782.0" stroke="#38a0dc" stroke-width="1.2" shape-rendering="crispEdges"/>
</svg>
</body></html>
